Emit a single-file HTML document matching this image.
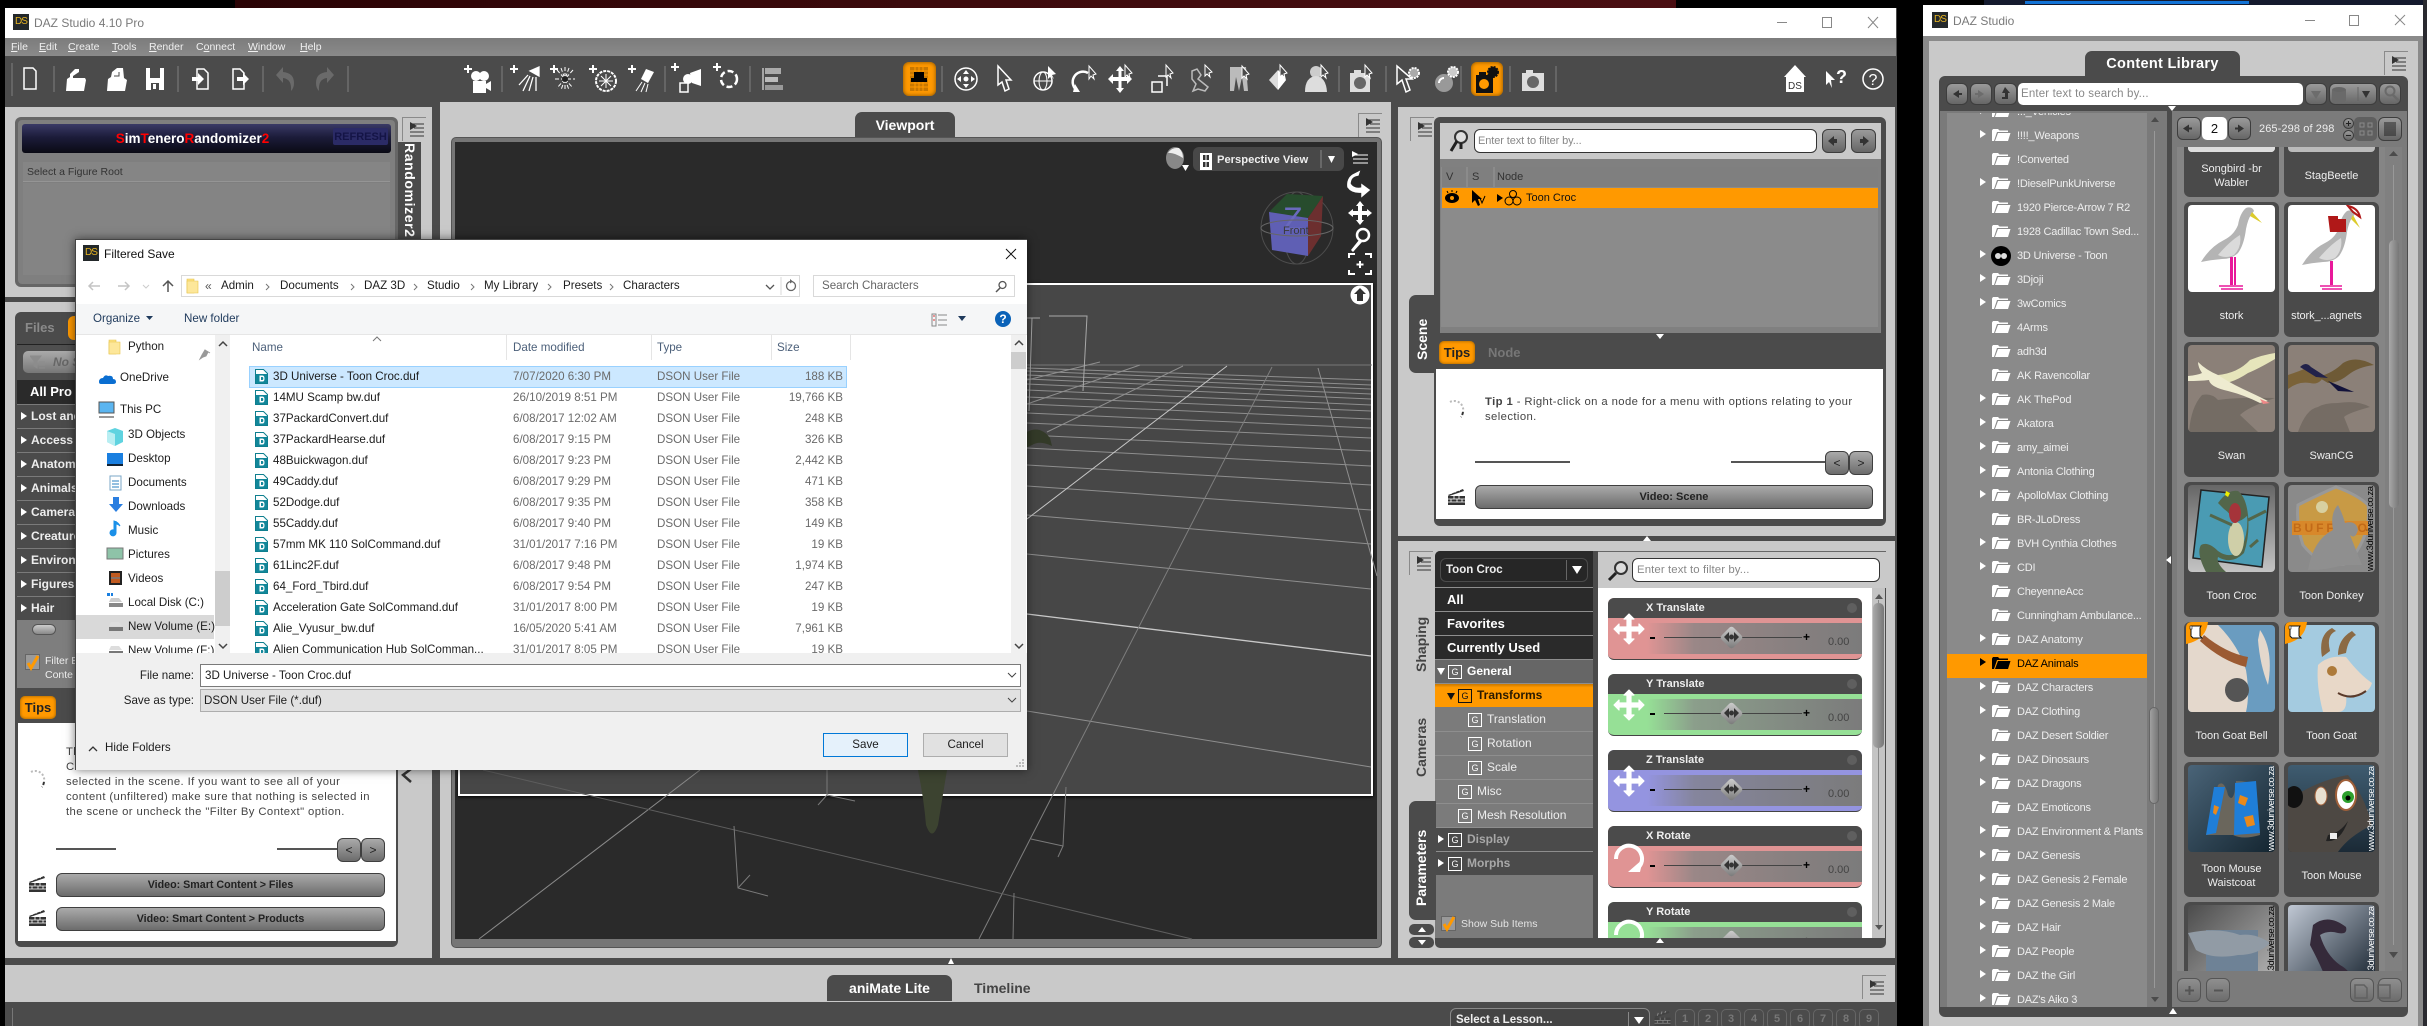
<!DOCTYPE html>
<html><head><meta charset="utf-8"><title>DAZ Studio</title>
<style>
html{margin:0;padding:0;background:#000;overflow:hidden;width:2427px;height:1026px;}
body{margin:0;padding:0;background:#000;width:2427px;height:1026px;overflow:hidden;position:relative;font-family:"Liberation Sans",sans-serif;font-size:11px;color:#fff;}
.a{position:absolute;white-space:nowrap;box-sizing:border-box;}
.btn{position:absolute;box-sizing:border-box;background:linear-gradient(#aaa,#6c6c6c);border:1px solid #3f3f3f;border-radius:6px;color:#222;text-align:center;}
.d{font-size:11.6px;color:#1c1c1c;}
.g{color:#6a6a6a;}
.tr{font-size:11px;letter-spacing:-.2px;color:#eee;left:2017px;line-height:16px;}
.pr{position:absolute;box-sizing:border-box;left:1435px;width:158px;height:24px;border-top:1px solid #8e8e8e;line-height:23px;font-size:13px;font-weight:bold;white-space:nowrap;}
.gi{position:absolute;width:14px;height:14px;border:1px solid #fff;box-sizing:border-box;font-size:9px;line-height:12px;text-align:center;color:#fff;font-weight:normal;}
.lr{position:absolute;box-sizing:border-box;left:17px;width:58px;height:24px;background:#4b4b4b;border-top:1px solid #7a7a7a;font-size:12px;font-weight:bold;line-height:23px;padding-left:14px;overflow:hidden;color:#eee;white-space:nowrap;}
.lab{position:absolute;text-align:center;font-size:11px;color:#eee;line-height:14px;width:95px;}
.card{position:absolute;width:95px;height:135px;background:#4a4a4a;border-radius:6px;}
.th{position:absolute;left:4px;top:3px;width:87px;height:87px;border-radius:4px;overflow:hidden;display:block;}
.sl{position:absolute;left:1608px;width:254px;height:61px;border-radius:6px;overflow:hidden;border-bottom:1px solid #444;}
.sl .h{position:absolute;left:0;top:0;width:254px;height:20px;background:#4b4b4b;color:#eee;font-size:11px;font-weight:bold;line-height:20px;padding-left:38px;box-sizing:border-box;}
.sl .b{position:absolute;left:39px;top:25px;width:215px;height:31px;}
.sl .v{position:absolute;left:220px;top:38px;color:#444;font-size:11px;}
.sl .t{position:absolute;left:56px;top:39px;width:138px;height:1px;background:#444;}
.sl .k{position:absolute;left:115px;top:31px;width:17px;height:17px;transform:rotate(45deg);background:linear-gradient(135deg,#d0d0d0,#777);border-radius:3px;}
.sl .m{position:absolute;left:42px;top:39px;width:5px;height:2px;background:#000;}
.sl .p{position:absolute;left:195px;top:32px;font-size:12px;font-weight:bold;color:#000;line-height:14px;}
.tb{position:absolute;box-sizing:border-box;background:linear-gradient(#9a9a9a,#666);border:1px solid #3d3d3d;border-radius:6px;}
</style></head>
<body>
<svg width="0" height="0" style="position:absolute">
<defs>
<symbol id="menuD" viewBox="0 0 24 24" overflow="visible"><path d="M.5 24V.5H24" fill="none" stroke="#8a8a8a"/><path d="M8 5l7 4-7 4z" fill="#333"/><path d="M8 7h14M12 11h10M8 15h14M8 19h14" stroke="#333" fill="none"/></symbol>
<symbol id="film" viewBox="0 0 17 16"><path d="M0 7h17v9H0z" fill="#333"/><path d="M0 10h17M0 13h17M6 7v3M11 7v3M3 10v3M9 10v3M14 10v3" stroke="#fff" stroke-width=".8"/><path d="M0 6L15 0l1 2L1 7z" fill="#333"/><path d="M3 5l1-3M7 3.500l1-3M11 2l1-2" stroke="#fff"/></symbol>
<symbol id="spin" viewBox="0 0 16 20"><path d="M1 2a9 9 0 0 1 13 10" fill="none" stroke="#bbb" stroke-width="2" stroke-dasharray="2 2"/><path d="M14 12q-.500 3-2 5" stroke="#333" stroke-width="2" fill="none" stroke-dasharray="3 2"/></symbol>
<symbol id="file" viewBox="0 0 13 15"><path d="M.5.500h8l4 4v10H.5z" fill="#fff" stroke="#0f7f8f"/><path d="M1 5h11v9H1z" fill="#12879a"/><path d="M4.500 6.500h3q2 0 2 3t-2 3h-3z" fill="#fff"/><path d="M6 8h1.300q1 0 1 1.500T7.300 11H6z" fill="#12879a"/></symbol>
<symbol id="fold" viewBox="0 0 20 14"><path d="M1 13V2.500L2 1h5l1.500 1.500H17V4H6L3 13zM4 13l3-8h12.500L17 13z" fill="#fff"/></symbol>
<symbol id="foldK" viewBox="0 0 20 14"><path d="M1 13V2.500L2 1h5l1.500 1.500H17V4H6L3 13zM4 13l3-8h12.500L17 13z" fill="#000"/></symbol>
<symbol id="yf" viewBox="0 0 16 16"><path d="M1 1h7v14H1z" fill="#fde283" stroke="#e6c34a" stroke-width=".6"/><path d="M1 3h11v12H1z" fill="#fde79a" stroke="#e6c34a" stroke-width=".6"/></symbol>
<symbol id="mov" viewBox="-16 -16 32 32"><path d="M0-15l5 5H2v8h8v-3l5 5-5 5v-3H2v8h3l-5 5-5-5h3V2h-8v3l-5-5 5-5v3h8v-8h-3z" fill="#fff" stroke="#fff" stroke-width="1.200" stroke-linejoin="round"/></symbol>
<symbol id="rot" viewBox="-16 -16 32 32"><path d="M-13 2a13 13 0 1 1 23 8" fill="none" stroke="#fff" stroke-width="4"/><path d="M14 2L11 15H-1z" fill="#fff"/></symbol>
<symbol id="scroll" viewBox="0 0 14 14"><path d="M2 1h10l-1 2v8l2 2H4l-2-2V3z" fill="#fff" stroke="#111"/><path d="M1 1h2v3H1z" fill="#fff" stroke="#111" stroke-width=".6"/></symbol>
</defs>
</svg>

<!-- desktop backdrop -->
<div class="a" style="left:235px;top:0;width:1441px;height:8px;background:linear-gradient(90deg,#2a0305,#3d0a0c 50%,#4a0e12)"></div>
<div class="a" style="left:1984px;top:0;width:443px;height:6px;background:#141a2e"></div>
<div class="a" style="left:2025px;top:1px;width:224px;height:3px;background:#1273d6"></div>
<div class="a" style="left:2423px;top:0;width:4px;height:1026px;background:#2a2a30"></div>

<!-- MAIN WINDOW -->
<div class="a" style="left:5px;top:8px;width:1892px;height:1018px;background:#4b4b4b"></div>
<div class="a" style="left:5px;top:8px;width:1891px;height:30px;background:#fff"></div>
<div class="a" style="left:13px;top:14px;width:16px;height:16px;background:#23282a;color:#e6b422;font-size:10px;line-height:16px;text-align:center;letter-spacing:-1px">DS</div>
<div class="a" style="left:34px;top:15px;font-size:12px;line-height:16px;color:#7a7a7a">DAZ Studio 4.10 Pro</div>
<svg class="a" style="left:1770px;top:12px" width="116" height="20"><path d="M7 10.500h10" stroke="#888"/><path d="M52.500 5.500h9v10h-9z" fill="none" stroke="#888"/><path d="M98 5l10 11M108 5L98 16" stroke="#888" fill="none"/></svg>
<div class="a" style="left:5px;top:38px;width:1891px;height:18px;background:linear-gradient(#7c7c7c,#8a8a8a)"></div>
<div class="a" style="left:11px;top:39px;line-height:16px;color:#f0f0f0;font-size:10.5px"><u>F</u>ile</div>
<div class="a" style="left:39px;top:39px;line-height:16px;color:#f0f0f0;font-size:10.5px"><u>E</u>dit</div>
<div class="a" style="left:68px;top:39px;line-height:16px;color:#f0f0f0;font-size:10.5px"><u>C</u>reate</div>
<div class="a" style="left:112px;top:39px;line-height:16px;color:#f0f0f0;font-size:10.5px"><u>T</u>ools</div>
<div class="a" style="left:149px;top:39px;line-height:16px;color:#f0f0f0;font-size:10.5px"><u>R</u>ender</div>
<div class="a" style="left:196px;top:39px;line-height:16px;color:#f0f0f0;font-size:10.5px">C<u>o</u>nnect</div>
<div class="a" style="left:248px;top:39px;line-height:16px;color:#f0f0f0;font-size:10.5px"><u>W</u>indow</div>
<div class="a" style="left:300px;top:39px;line-height:16px;color:#f0f0f0;font-size:10.5px"><u>H</u>elp</div>

<!-- orange toolbar buttons -->
<div class="a" style="left:903px;top:62px;width:33px;height:34px;border-radius:6px;background:#ff9900;box-shadow:inset 0 0 4px #7a4a00"></div>
<div class="a" style="left:1471px;top:62px;width:32px;height:34px;border-radius:6px;background:#ff9900;box-shadow:inset 0 0 4px #7a4a00"></div>

<!-- toolbar icons -->
<svg class="a" style="left:0;top:56px" width="1897" height="46" viewBox="0 56 1897 46">
<g stroke="#6e6e6e" stroke-width="1.500"><path d="M12 63v33M54 66v26M178 66v26M263 66v26M348 66v26M502 66v26M665 66v26M750 66v26M942 66v26M1339 66v26M1386 66v26M1461 66v26M1510 66v26M1556 66v26"/></g>
<g fill="#fff">
<g transform="translate(30,79)"><path d="M-6-11H3L6-8V10H-6Z" fill="#4b4b4b" stroke="#fff" stroke-width="1.500"/></g>
<g transform="translate(76,79)"><path d="M-10 12L-9 0-6-2-6-5-1-10 3-10 3-7-3-3-3-1 9-1 10 1 8 12Z"/></g>
<g transform="translate(117,79)"><path d="M-10 12L-9 0-6-2-5-7 0-11 6-11 7-1 10 1 8 12Z"/><path d="M-3-3h5v-4" stroke="#4b4b4b" fill="none"/></g>
<g transform="translate(155,79)"><path d="M-9-11H9V11H-9Z"/><path d="M-5-11H5V-1H-5ZM-4 4H4V11H-4Z" fill="#4b4b4b"/><path d="M-2 5H1V10H-2Z"/></g>
<g transform="translate(201,79)"><path d="M-4-10H3L7-6V10H-4Z" fill="#4b4b4b" stroke="#fff" stroke-width="1.500"/><path d="M-9-2h6v-4l6 6-6 6V2H-9Z"/></g>
<g transform="translate(240,79)"><path d="M-7-10H0L4-6V10H-7Z" fill="#4b4b4b" stroke="#fff" stroke-width="1.500"/><path d="M-3-2H3V-6L9 0 3 6V2H-3Z"/></g>
<g transform="translate(285,79)" fill="#6a6a6a"><path d="M-9-4L-2-12V-7Q9-6 9 4 9 9 6 12 7 0-2-1V4Z"/></g>
<g transform="translate(325,79)" fill="#6a6a6a"><path d="M9-4L2-12V-7Q-9-6-9 4-9 9-6 12-7 0 2-1V4Z"/></g>
<g transform="translate(479,79)"><path d="M-12-14h2v3h3v2h-3v3h-2v-3h-3v-2h3z"/><circle cx="-3" cy="-3" r="5"/><circle cx="5" cy="-3" r="5"/><path d="M-6 2H7V5L12 2V12L7 9V14H-6Z"/></g>
<g transform="translate(527,79)"><path d="M-14-14h2v3h3v2h-3v3h-2v-3h-3v-2h3z"/><path d="M3-8L12-12V-3ZM1-4L-8 6M3-3L-4 12M6-2L2 12M9-2V12" stroke="#fff" stroke-width="1.300" fill="#fff"/></g>
<g transform="translate(565,79)"><path d="M-12-14h2v3h3v2h-3v3h-2v-3h-3v-2h3z"/><path d="M0-12V12M-10 0H10M-8-9L8 9M8-9L-8 9M-4-11L4 11M4-11L-4 11" stroke="#fff" stroke-width="1" stroke-dasharray="4 2"/><circle r="3" fill="#222"/></g>
<g transform="translate(606,79)"><path d="M-14-14h2v3h3v2h-3v3h-2v-3h-3v-2h3z"/><circle r="10" cy="2" fill="#4b4b4b" stroke="#fff" stroke-width="2" stroke-dasharray="3 1"/><path d="M0-5V9M-7 2H7M-5-3L5 7M5-3L-5 7" stroke="#fff"/></g>
<g transform="translate(643,79)"><path d="M-12-14h2v3h3v2h-3v3h-2v-3h-3v-2h3z"/><path d="M3-10L11-7 5 4-2 0Z"/><path d="M-1 3L-7 12M2 4L-2 13M5 5L3 13" stroke="#fff"/></g>
<g transform="translate(689,79)"><path d="M-15-16h2v3h3v2h-3v3h-2v-3h-3v-2h3z"/><path d="M1-6L12-10V7L3 4Z"/><circle cx="-1" cy="0" r="5"/><path d="M-9 4H-1V13H-9Z" fill="#4b4b4b" stroke="#fff" stroke-width="1.500"/></g>
<g transform="translate(729,79)"><path d="M-13-16h2v3h3v2h-3v3h-2v-3h-3v-2h3z"/><circle r="8" fill="none" stroke="#fff" stroke-width="2.500" stroke-dasharray="6 3"/></g>
<g transform="translate(773,79)"><path d="M-10-11V11" stroke="#fff"/><path d="M-8-11H8V-5H-8Z" fill="#aaa"/><path d="M-8-2H5V3H-8Z" fill="#bbb"/><path d="M-8 6H10V11H-8Z" fill="#999"/></g>
<g transform="translate(919,79)"><rect x="-9" y="-12" width="18" height="24" fill="#c97800"/><path d="M-9-8h18M-9-4h18M-9 0h18M-9 4h18M-9 8h18M-4-12v24M0-12v24M4-12v24" stroke="#ff9900"/><path d="M-5-7H5V3H-5ZM-8 -1H8V3H-8Z" fill="#000"/></g>
<g transform="translate(966,79)"><circle r="11" fill="#4b4b4b" stroke="#fff" stroke-width="1.500"/><path d="M0-9L3-5H-3ZM0 9L3 5H-3ZM-9 0L-5-3V3ZM9 0L5-3V3Z"/><circle r="2.500"/></g>
<g transform="translate(1004,79)"><path d="M-6-13V6L-2 3 1 12 5 10 2 1H7Z" fill="#4b4b4b" stroke="#fff" stroke-width="1.500"/></g>
<g transform="translate(1043,79)"><circle r="9" cy="2" fill="none" stroke="#fff" stroke-width="1.500"/><ellipse cy="2" rx="4" ry="9" fill="none" stroke="#fff"/><path d="M-9 2H9" stroke="#fff"/><path d="M5-13V0L8-3 11 0 9-4 13-5Z"/></g>
<g transform="translate(1082,79)"><path d="M-4 12A10 10 0 1 1 6 -6" fill="none" stroke="#fff" stroke-width="2.500"/><path d="M-7 5L-2 13-9 13Z"/><path d="M7-13V0L9-3 12 0 11-4 14-5Z" fill="#4b4b4b" stroke="#fff"/></g>
<g transform="translate(1120,79)"><path d="M0-13L4-8H1.500V-2H7V-5L12 0 7 5V2H1.500V9H4L0 14-4 9H-1.500V2H-7V5L-12 0-7-5V-2H-1.500V-8H-4Z"/><path d="M5-14V-2L7-4 10-1 9-5 12-6Z" fill="#4b4b4b" stroke="#fff"/></g>
<g transform="translate(1160,79)"><path d="M-8 3H2V13H-8Z" fill="#4b4b4b" stroke="#fff" stroke-width="1.500"/><path d="M-2-3H7V7" fill="none" stroke="#fff" stroke-width="1.500"/><path d="M6-14V-2L8-4 11-1 10-5 13-6Z" fill="#4b4b4b" stroke="#fff"/></g>
<g transform="translate(1200,79)" fill="#bbb"><path d="M-8-8L-3-10 1-4-2 0 8 8 5 12-2 10-7 12-4 5-8 0Z" fill="none" stroke="#bbb" stroke-width="1.500"/><path d="M5-14V-3L7-5 10-2 9-6 12-7Z" fill="#4b4b4b" stroke="#fff"/></g>
<g transform="translate(1239,79)"><path d="M-9 12V-12H7L9 12H5L3-2 0 12-3-2-5 12Z" fill="#bbb"/><path d="M3-13V-1L5-3 8 0 7-4 10-5Z" fill="#4b4b4b" stroke="#fff"/></g>
<g transform="translate(1277,79)"><path d="M-8 1L1-9 9 1 1 11Z" fill="#ddd"/><path d="M1-9L9 1 1 11Z" fill="#fff"/><path d="M3-14V-2L5-4 8-1 7-5 10-6Z" fill="#4b4b4b" stroke="#fff"/></g>
<g transform="translate(1316,79)"><circle cy="-7" r="6" fill="#ccc"/><path d="M-11 13Q-11-2 0-3 10-2 11 13Z" fill="#ddd"/><path d="M5-14V-2L7-4 10-1 9-5 12-6Z" fill="#4b4b4b" stroke="#fff"/></g>
<g transform="translate(1360,79)"><path d="M-10-6H10V13H-10Z" fill="#ddd"/><circle cy="4" r="6" fill="#666"/><path d="M-6-9H1V-6H-6Z" fill="#ddd"/><path d="M5-14V-2L7-4 10-1 9-5 12-6Z" fill="#4b4b4b" stroke="#fff"/></g>
<g transform="translate(1408,79)"><path d="M-11-13V5L-6 1-2 13 2 11-2 0H4Z" fill="#4b4b4b" stroke="#fff" stroke-width="1.500"/><circle cx="6" cy="-6" r="5" fill="#aaa" stroke="#fff" stroke-dasharray="2 1" stroke-width="2"/></g>
<g transform="translate(1447,79)"><circle cx="-3" cy="4" r="9" fill="#999"/><path d="M-8 4a5 5 0 0 1 5-5" stroke="#fff" fill="none" stroke-width="2"/><circle cx="6" cy="-7" r="5" fill="#ccc" stroke="#fff" stroke-dasharray="2 1" stroke-width="2"/></g>
<g transform="translate(1487,79)"><path d="M-11-4H6V14H-11Z" fill="#111"/><circle cx="-3" cy="5" r="5" fill="#ff9900"/><path d="M-8-7H-1V-4H-8Z" fill="#111"/><circle cx="6" cy="-7" r="5" fill="#111" stroke="#111" stroke-dasharray="2 1" stroke-width="2"/></g>
<g transform="translate(1533,79)"><path d="M-11-6H11V12H-11Z" fill="#ddd"/><path d="M-7-9H0V-6H-7Z" fill="#ddd"/><circle cy="3" r="6" fill="#666"/></g>
<g transform="translate(1795,79)"><path d="M0-14L11-2H9V13H-9V-2H-11Z"/><text x="0" y="10" text-anchor="middle" font-size="10" fill="#333" font-family="Liberation Sans">DS</text></g>
<g transform="translate(1833,79)"><path d="M-7-8V6L-4 3-1 9-2 1H2Z"/><text x="3" y="4" font-size="18" font-weight="bold" fill="#fff" font-family="Liberation Sans">?</text></g>
<g transform="translate(1873,79)"><circle r="10" fill="none" stroke="#fff" stroke-width="1.500"/><text x="0" y="6" text-anchor="middle" font-size="16" fill="#fff" font-family="Liberation Sans">?</text></g>
<path d="M219 102l-4 5h8zM1647 102l-4 5h8z" fill="#fff"/>
</g>
</svg>

<!-- LEFT TOP PANEL -->
<div class="a" style="left:5px;top:107px;width:427px;height:190px;background:#c9c9c9"></div>
<svg class="a" style="left:402px;top:117px" width="24" height="24"><use href="#menuD" width="24" height="24"/></svg>
<div class="a" style="left:15px;top:117px;width:383px;height:170px;background:#666;border-radius:6px"></div>
<div class="a" style="left:18px;top:120px;width:377px;height:164px;background:#7f7f7f;border-radius:4px"></div>
<div class="a" style="left:22px;top:124px;width:369px;height:29px;border-radius:3px;background:linear-gradient(#3a3a66,#1c1c3a 45%,#0a0a14);font-size:13.500px;font-weight:bold;line-height:29px;text-align:center;padding-right:28px"><span style="color:#f00">S</span>im<span style="color:#f00">T</span>enero<span style="color:#f00">R</span>andomizer<span style="color:#f00">2</span></div>
<div class="a" style="left:333px;top:128px;width:55px;height:17px;background:#2b2b66;color:#141446;font-size:11px;line-height:18px;text-align:center;font-weight:bold;border-radius:2px">REFRESH</div>
<div class="a" style="left:23px;top:162px;width:367px;height:20px;background:#858585;border-bottom:1px solid #959595;color:#333;font-size:10.500px;line-height:20px;padding-left:4px">Select a Figure Root</div>
<div class="a" style="left:23px;top:183px;width:367px;height:92px;background:#848484"></div>
<div class="a" style="left:398px;top:142px;width:23px;height:100px;background:#4b4b4b"></div>
<div class="a" style="left:402px;top:143px;height:100px;writing-mode:vertical-lr;font-size:14px;font-weight:bold;color:#fff;line-height:16px;letter-spacing:.6px">Randomizer2</div>
<div class="a" style="left:432px;top:102px;width:8px;height:856px;background:#4b4b4b"></div>

<!-- LEFT LOWER PANEL -->
<div class="a" style="left:5px;top:302px;width:427px;height:656px;background:#c9c9c9"></div>
<div class="a" style="left:15px;top:312px;width:383px;height:635px;background:#4b4b4b;border-radius:6px"></div>
<div class="a" style="left:25px;top:319px;font-size:13px;font-weight:bold;color:#8a8a8a;line-height:18px">Files</div>
<div class="a" style="left:68px;top:316px;width:30px;height:24px;background:#ff9900;border-radius:6px 0 0 6px"></div>
<div class="a" style="left:17px;top:344px;width:60px;height:36px;background:#4f4f4f;border-top:1px solid #222"></div>
<div class="a" style="left:23px;top:351px;width:60px;height:22px;background:linear-gradient(#aaa,#777);border-radius:5px;color:#666;font-size:12px;font-weight:bold;font-style:italic;line-height:22px;padding-left:30px">No S</div>
<svg class="a" style="left:30px;top:355px" width="16" height="15"><path d="M0 1h11L7 6v7L4 11V6zM9 7h6M9 10h6M9 13h6" fill="#8c8c8c" stroke="#8c8c8c"/></svg>
<div class="a" style="left:17px;top:380px;width:58px;height:24px;background:#2a2a2a;font-size:13px;font-weight:bold;line-height:24px;padding-left:13px;color:#fff;overflow:hidden">All Pro</div>
<div class="lr" style="top:404px">Lost and</div>
<div class="lr" style="top:428px">Access</div>
<div class="lr" style="top:452px">Anatom</div>
<div class="lr" style="top:476px">Animals</div>
<div class="lr" style="top:500px">Camera</div>
<div class="lr" style="top:524px">Creature</div>
<div class="lr" style="top:548px">Environ</div>
<div class="lr" style="top:572px">Figures</div>
<div class="lr" style="top:596px">Hair</div>
<svg class="a" style="left:20px;top:404px" width="10" height="216" fill="#fff"><path d="M1 8l6 4-6 4zM1 32l6 4-6 4zM1 56l6 4-6 4zM1 80l6 4-6 4zM1 104l6 4-6 4zM1 128l6 4-6 4zM1 152l6 4-6 4zM1 176l6 4-6 4zM1 200l6 4-6 4z"/></svg>
<div class="a" style="left:17px;top:620px;width:60px;height:68px;background:#7e7e7e"></div>
<div class="a" style="left:32px;top:624px;width:24px;height:11px;background:linear-gradient(#ccc,#888);border-radius:6px;border:1px solid #555"></div>
<div class="a" style="left:25px;top:654px;width:15px;height:16px;background:#9a9a9a;border:1px solid #666"></div>
<svg class="a" style="left:25px;top:654px" width="16" height="18"><path d="M3 9l3 5 7-12" fill="none" stroke="#ff9900" stroke-width="3"/></svg>
<div class="a" style="left:45px;top:654px;font-size:10.500px;color:#eee;line-height:14px">Filter B<br>Conte</div>
<div class="a" style="left:20px;top:696px;width:36px;height:23px;background:#ff9900;border-radius:5px;color:#222;font-size:13px;font-weight:bold;line-height:23px;text-align:center;box-shadow:inset 0 0 3px #8a5500">Tips</div>
<div class="a" style="left:18px;top:723px;width:378px;height:218px;background:#fff"></div>
<div class="a" style="left:66px;top:745px;font-size:11.300px;letter-spacing:.4px;color:#444;line-height:15px;width:330px">Th<br>Co<br>selected in the scene. If you want to see all of your<br>content (unfiltered) make sure that nothing is selected in<br>the scene or uncheck the "Filter By Context" option.</div>
<svg class="a" style="left:30px;top:770px" width="16" height="20"><use href="#spin" width="16" height="20"/></svg>
<div class="a" style="left:56px;top:848px;width:60px;height:1.500px;background:#555"></div>
<div class="a" style="left:277px;top:848px;width:60px;height:1.500px;background:#555"></div>
<div class="btn" style="left:337px;top:838px;width:24px;height:24px;font-size:12px;line-height:22px">&lt;</div>
<div class="btn" style="left:361px;top:838px;width:24px;height:24px;font-size:12px;line-height:22px">&gt;</div>
<svg class="a" style="left:29px;top:873px" width="17" height="22"><use href="#film" width="17" height="22"/></svg>
<svg class="a" style="left:29px;top:907px" width="17" height="22"><use href="#film" width="17" height="22"/></svg>
<div class="btn" style="left:56px;top:873px;width:329px;height:24px;font-size:10.700px;font-weight:bold;line-height:22px">Video: Smart Content &gt; Files</div>
<div class="btn" style="left:56px;top:907px;width:329px;height:24px;font-size:10.700px;font-weight:bold;line-height:22px">Video: Smart Content &gt; Products</div>
<svg class="a" style="left:398px;top:768px" width="20" height="16"><path d="M13 1L5 7l8 7" fill="none" stroke="#333" stroke-width="2.500"/></svg>

<!-- VIEWPORT -->
<div class="a" style="left:440px;top:102px;width:951px;height:856px;background:#c9c9c9"></div>
<div class="a" style="left:855px;top:112px;width:100px;height:26px;background:#4b4b4b;border-radius:7px 7px 0 0;font-size:14px;font-weight:bold;line-height:27px;text-align:center;color:#fff">Viewport</div>
<svg class="a" style="left:1358px;top:113px" width="24" height="24"><use href="#menuD" width="24" height="24"/></svg>
<div class="a" style="left:451px;top:137px;width:931px;height:811px;background:#767676;border-radius:5px;border:1px solid #555"></div>
<div class="a" style="left:455px;top:142px;width:922px;height:797px;background:#2a2a2a"></div>
<div class="a" style="left:458px;top:283px;width:915px;height:513px;background:#474747;border:2px solid #fff;box-shadow:0 1px 3px #000"></div>
<svg class="a" style="left:0;top:0" width="1400" height="970" viewBox="0 0 1400 970">
<g stroke="#8e8e8e" stroke-width="1" fill="none">
<path d="M1027 365H1372" stroke="#777"/>
<path d="M1027 614L1371 656" stroke="#c8c8c8" stroke-width="1.300"/>
<path d="M1027 711L1371 767M1027 554L1371 589M1027 515L1371 544M1027 486L1371 510M1027 465L1371 485M1027 448L1371 466M1027 435L1371 451M1027 423L1371 438M1027 413L1371 428M1027 404L1371 419M1027 397L1371 411M1027 390L1371 405M1027 384L1371 399M1027 379L1371 394M1027 375L1371 389M1027 371L1371 385M1027 368L1371 380"/>
<path d="M1227 366L1027 519" stroke="#c6c6c6"/>
<path d="M700 770L479 939" stroke="#8a8a8a"/>
<path d="M1272 367L979 939" stroke="#7e7e7e"/>
<path d="M1318 368L1377 576"/>
<path d="M1183 366L1047 432M1140 365L1027 404M1100 362L1027 380"/>
<path d="M483 770L1192 939" stroke="#5e5e5e"/>
<path d="M1049 316H1087L1083 391M1027 318H1040M1032 318L1029 411" stroke="#a8a8a8"/>
<path d="M1066 787L1063 846 1031 839M1063 846L1058 857" stroke="#7a7a7a"/>
<path d="M734 826L738 888 768 896M738 888L750 875" stroke="#7a7a7a"/>
<path d="M827 770V795L855 801M827 795L818 805" stroke="#7a7a7a"/>
<path d="M1014 893L1013 939" stroke="#7a7a7a"/>
</g>
<path d="M918 770Q924 800 926 825 932 842 938 825 942 800 947 770Z" fill="#3c4330"/>
<path d="M1027 432Q1040 425 1050 438L1052 446Q1040 440 1032 445 1028 447 1027 447Z" fill="#333a28"/>
<!-- viewport controls -->
<g transform="translate(1175,158)"><ellipse cx="0" cy="0" rx="9" ry="11" fill="#888"/><path d="M-7-5Q-3-11 4-10 8-6 8 0-2-6-7-5Z" fill="#eee"/></g>
<path d="M1182 165l7 0-3.500 6z" fill="#fff"/>
<rect x="1193" y="147" width="151" height="24" rx="6" fill="#484848"/>
<path d="M1200 153H1212V170H1200Z" fill="#fff"/><path d="M1203 155v5h2.500v-5zM1206.500 155v5h2.500v-5zM1203 162v5h2.500v-5zM1206.500 162v5h2.500v-5z" fill="#333"/>
<text x="1217" y="163" font-family="Liberation Sans" font-size="11.200" font-weight="bold" fill="#eee">Perspective View</text>
<path d="M1321 150v18" stroke="#888"/><path d="M1328 156h7l-3.500 7z" fill="#fff"/>
<path d="M1352 151l6 3-6 3z" fill="#fff"/><path d="M1353 155h15M1353 159h15M1353 163h15" stroke="#fff" fill="none"/>
<g fill="#fff">
<path d="M1350 184Q1350 176 1358 175L1359 172 1353 175Q1347 179 1348 187 1352 193 1362 192V196L1369 190 1362 185V188Q1354 190 1350 184Z" stroke="#fff" stroke-width="1.500"/>
<path d="M1360 201L1364 206H1362V211H1367V209L1372 213 1367 217V215H1362V220H1364L1360 225 1356 220H1358V215H1353V217L1348 213 1353 209V211H1358V206H1356Z"/>
<circle cx="1363" cy="235" r="6" fill="none" stroke="#fff" stroke-width="2.500"/><path d="M1359 240L1351 250 1353 252 1362 242Z"/>
<path d="M1352 258v-4h6M1368 254h6v4M1352 270v4h6M1374 270v4h-6M1363 261v7M1359.500 264.500h7" fill="none" stroke="#fff" stroke-width="2" transform="translate(-3,0)"/>
<circle cx="1360" cy="295" r="9.500"/><path d="M1360 288l6 6h-3v7h-6v-7h-3z" fill="#333"/>
</g>
<!-- cube -->
<g transform="translate(1297,228)">
<ellipse rx="36" ry="36" fill="none" stroke="#4d4d4d"/><ellipse rx="36" ry="8" fill="none" stroke="#4d4d4d"/><ellipse rx="14" ry="36" fill="none" stroke="#4d4d4d"/>
<path d="M-28-16L-10-34 26-32 11-10Z" fill="#274c2d"/>
<path d="M-28-16L11-10 11 28-25 22Z" fill="#5f5fb4"/>
<path d="M11-10L26-32 24 8 11 28Z" fill="#6c2f2f"/>
<text x="-14" y="2" font-family="Liberation Sans" font-size="32" fill="#6a6abd">Z</text>
<text x="-14" y="6" font-family="Liberation Sans" font-size="11" fill="#3a3a3a">Front</text>
<ellipse rx="36" ry="8" fill="none" stroke="#666"/>
</g>
</svg>

<!-- RIGHT TOP PANEL -->
<div class="a" style="left:1391px;top:102px;width:7px;height:856px;background:#4b4b4b"></div>
<div class="a" style="left:1398px;top:107px;width:497px;height:429px;background:#c9c9c9"></div>
<svg class="a" style="left:1410px;top:117px" width="24" height="24"><use href="#menuD" width="24" height="24"/></svg>
<div class="a" style="left:1434px;top:117px;width:452px;height:409px;background:#4b4b4b;border-radius:6px"></div>
<div class="a" style="left:1440px;top:123px;width:441px;height:36px;background:#c9c9c9"></div>
<svg class="a" style="left:1448px;top:128px" width="24" height="26"><circle cx="13" cy="9" r="6" fill="#ddd" stroke="#333" stroke-width="2"/><path d="M9 13L3 23M13 15v6" stroke="#222" stroke-width="3"/></svg>
<div class="a" style="left:1474px;top:129px;width:343px;height:24px;background:#fff;border:1px solid #333;border-radius:6px;color:#888;font-size:11px;line-height:22px;padding-left:3px;letter-spacing:-.1px">Enter text to filter by...</div>
<div class="tb" style="left:1822px;top:129px;width:24px;height:24px"></div>
<div class="tb" style="left:1851px;top:129px;width:25px;height:24px"></div>
<svg class="a" style="left:1822px;top:129px" width="54" height="24" fill="#333"><path d="M6 12l6-5v3h3v4h-3v3z"/><path d="M47 12l-6-5v3h-3v4h3v3z"/></svg>
<div class="a" style="left:1440px;top:159px;width:441px;height:174px;background:#808080"></div>
<div class="a" style="left:1441px;top:167px;width:437px;height:160px;background:#8b8b8b"></div>
<div class="a" style="left:1442px;top:167px;width:24px;height:20px;background:#7f7f7f;color:#333;line-height:20px;padding-left:4px;font-size:11px">V</div>
<div class="a" style="left:1468px;top:167px;width:25px;height:20px;background:#7f7f7f;color:#333;line-height:20px;padding-left:4px;font-size:11px">S</div>
<div class="a" style="left:1495px;top:167px;width:383px;height:20px;background:#7f7f7f;color:#333;line-height:20px;padding-left:2px;font-size:11px">Node</div>
<div class="a" style="left:1442px;top:188px;width:436px;height:20px;background:#ff9900"></div>
<svg class="a" style="left:1442px;top:188px" width="80" height="20"><ellipse cx="10" cy="10" rx="7" ry="5" fill="#000"/><circle cx="10" cy="10" r="2" fill="#ff9900"/><path d="M6 5l-1-2M10 4V2M14 5l1-2" stroke="#000"/><path d="M30 2v13l3-3 3 6 2-1-2-6h4z" fill="#000"/><path d="M38 10l2 5 3-7" fill="none" stroke="#000"/><path d="M55 6l6 4-6 4z" fill="#000"/><circle cx="71" cy="6" r="3.500" fill="none" stroke="#000"/><circle cx="67" cy="13" r="4" fill="none" stroke="#000"/><circle cx="75" cy="13" r="4" fill="none" stroke="#000"/></svg>
<div class="a" style="left:1526px;top:188px;line-height:20px;color:#111;font-size:11px">Toon Croc</div>
<div class="a" style="left:1409px;top:295px;width:27px;height:78px;background:#4b4b4b;border-radius:7px 0 0 7px"></div>
<div class="a" style="left:1414px;top:305px;height:55px;writing-mode:vertical-rl;transform:rotate(180deg);font-size:14px;font-weight:bold;color:#fff;line-height:16px;text-align:left">Scene</div>
<svg class="a" style="left:1650px;top:333px" width="20" height="8"><path d="M6 1h8l-4 5z" fill="#fff"/></svg>
<div class="a" style="left:1439px;top:341px;width:36px;height:23px;background:#ff9900;border-radius:5px;color:#222;font-size:13px;font-weight:bold;line-height:23px;text-align:center;box-shadow:inset 0 0 3px #8a5500">Tips</div>
<div class="a" style="left:1488px;top:345px;font-size:13px;font-weight:bold;color:#777;line-height:16px">Node</div>
<div class="a" style="left:1436px;top:369px;width:447px;height:150px;background:#fff"></div>
<div class="a" style="left:1485px;top:395px;font-size:11.300px;color:#444;line-height:15px;letter-spacing:.4px"><b>Tip 1</b> - Right-click on a node for a menu with options relating to your<br>selection.</div>
<svg class="a" style="left:1449px;top:400px" width="16" height="20"><use href="#spin" width="16" height="20"/></svg>
<div class="a" style="left:1475px;top:461px;width:95px;height:1.500px;background:#555"></div>
<div class="a" style="left:1731px;top:461px;width:94px;height:1.500px;background:#555"></div>
<div class="btn" style="left:1825px;top:451px;width:24px;height:24px;font-size:12px;line-height:22px">&lt;</div>
<div class="btn" style="left:1849px;top:451px;width:24px;height:24px;font-size:12px;line-height:22px">&gt;</div>
<svg class="a" style="left:1448px;top:488px" width="17" height="18"><use href="#film" width="17" height="18"/></svg>
<div class="btn" style="left:1475px;top:485px;width:398px;height:24px;font-size:11px;font-weight:bold;line-height:22px">Video: Scene</div>

<!-- PARAM PANEL -->
<div class="a" style="left:1398px;top:541px;width:497px;height:417px;background:#c9c9c9"></div>
<svg class="a" style="left:1640px;top:536px" width="14" height="6"><path d="M7 0l4 5H3z" fill="#fff"/></svg>
<svg class="a" style="left:1409px;top:551px" width="24" height="24"><use href="#menuD" width="24" height="24"/></svg>
<div class="a" style="left:1435px;top:551px;width:451px;height:397px;background:#4b4b4b;border-radius:5px"></div>
<div class="a" style="left:1435px;top:551px;width:158px;height:36px;background:#2a2a2a;border-radius:5px 0 0 0"></div>
<div class="a" style="left:1440px;top:558px;width:148px;height:24px;border:1px solid #4b4b4b;border-radius:6px;background:#262626;font-size:11.500px;font-weight:bold;line-height:22px;padding-left:5px;color:#eee">Toon Croc</div>
<div class="a" style="left:1566px;top:560px;width:1px;height:20px;background:#666"></div>
<svg class="a" style="left:1570px;top:562px" width="16" height="16"><path d="M2 4h10L7 12z" fill="#fff"/></svg>
<div class="pr" style="top:587px;background:#2a2a2a;padding-left:12px">All</div>
<div class="pr" style="top:611px;background:#2a2a2a;padding-left:12px">Favorites</div>
<div class="pr" style="top:635px;background:#2a2a2a;padding-left:12px">Currently Used</div>
<div class="pr" style="top:659px;background:#666;padding-left:32px;font-size:12px">General<span class="gi" style="left:13px;top:5px">G</span></div>
<div class="pr" style="top:683px;background:linear-gradient(#c97800 0,#ff9900 15%);padding-left:42px;color:#2a1a00;font-size:12px;border-top-color:#8e8e8e">Transforms<span class="gi" style="left:23px;top:5px;border-color:#111;color:#111">G</span></div>
<div class="pr" style="top:707px;background:#7b7b7b;padding-left:52px;font-weight:normal;font-size:12px;border-top-color:#7b7b7b;color:#eee">Translation<span class="gi" style="left:33px;top:5px">G</span></div>
<div class="pr" style="top:731px;background:#7b7b7b;padding-left:52px;font-weight:normal;font-size:12px;color:#eee">Rotation<span class="gi" style="left:33px;top:5px">G</span></div>
<div class="pr" style="top:755px;background:#7b7b7b;padding-left:52px;font-weight:normal;font-size:12px;color:#eee">Scale<span class="gi" style="left:33px;top:5px">G</span></div>
<div class="pr" style="top:779px;background:#7b7b7b;padding-left:42px;font-weight:normal;font-size:12px;color:#eee">Misc<span class="gi" style="left:23px;top:5px">G</span></div>
<div class="pr" style="top:803px;background:#7b7b7b;padding-left:42px;font-weight:normal;font-size:12px;color:#eee">Mesh Resolution<span class="gi" style="left:23px;top:5px">G</span></div>
<div class="pr" style="top:827px;background:#4b4b4b;padding-left:32px;font-size:12px;color:#a8a8a8">Display<span class="gi" style="left:13px;top:5px">G</span></div>
<div class="pr" style="top:851px;background:#4b4b4b;padding-left:32px;font-size:12px;color:#a8a8a8">Morphs<span class="gi" style="left:13px;top:5px">G</span></div>
<div class="a" style="left:1435px;top:875px;width:158px;height:63px;background:#7b7b7b"></div>
<svg class="a" style="left:1436px;top:659px" width="14" height="216"><path d="M1 9h8l-4 7z" fill="#fff"/><path d="M2 176l6 4-6 4zM2 200l6 4-6 4z" fill="#fff"/></svg>
<svg class="a" style="left:1446px;top:687px" width="10" height="16"><path d="M1 6h8l-4 7z" fill="#111"/></svg>
<div class="a" style="left:1441px;top:916px;width:15px;height:15px;background:#999;border:1px solid #666"></div>
<svg class="a" style="left:1441px;top:914px" width="16" height="18"><path d="M3 10l3 5 7-12" fill="none" stroke="#ff9900" stroke-width="3"/></svg>
<div class="a" style="left:1461px;top:916px;font-size:10.500px;color:#e4e4e4;line-height:16px">Show Sub Items</div>
<div class="a" style="top:606px;height:66px;width:16px;writing-mode:vertical-rl;transform:rotate(180deg);font-size:14px;font-weight:bold;color:#444;line-height:16px;left:1413px">Shaping</div>
<div class="a" style="left:1413px;top:707px;height:70px;writing-mode:vertical-rl;transform:rotate(180deg);font-size:14px;font-weight:bold;color:#444;line-height:16px">Cameras</div>
<div class="a" style="left:1409px;top:801px;width:27px;height:119px;background:#4b4b4b;border-radius:7px 0 0 7px"></div>
<div class="a" style="left:1413px;top:813px;height:93px;writing-mode:vertical-rl;transform:rotate(180deg);font-size:14px;font-weight:bold;color:#fff;line-height:16px">Parameters</div>
<div class="a" style="left:1409px;top:924px;width:25px;height:11px;background:#4b4b4b;border-radius:5px"></div>
<div class="a" style="left:1409px;top:937px;width:25px;height:11px;background:#4b4b4b;border-radius:5px"></div>
<svg class="a" style="left:1415px;top:925px" width="14" height="22"><path d="M3 7l4-5 4 5zM3 15l4 5 4-5z" fill="#fff"/></svg>

<div class="a" style="left:1598px;top:551px;width:288px;height:37px;background:#c9c9c9;border-top:1px solid #666"></div>
<svg class="a" style="left:1606px;top:559px" width="28" height="26"><circle cx="15" cy="9" r="6" fill="#ddd" stroke="#333" stroke-width="2"/><path d="M10 14L3 21" stroke="#222" stroke-width="3"/></svg>
<div class="a" style="left:1632px;top:558px;width:248px;height:24px;background:#fff;border:1px solid #333;border-radius:6px;color:#888;font-size:11.400px;line-height:22px;padding-left:4px;letter-spacing:.1px">Enter text to filter by...</div>
<div class="a" style="left:1598px;top:588px;width:274px;height:350px;background:#fff"></div>
<div class="a" style="left:1872px;top:588px;width:13px;height:350px;background:#c4c4c4"></div>
<div class="a" style="left:1878px;top:600px;width:1px;height:325px;background:#888"></div>
<div class="a" style="left:1873px;top:603px;width:11px;height:145px;background:linear-gradient(90deg,#aaa,#777);border-radius:5px"></div>
<svg class="a" style="left:1872px;top:590px" width="13" height="346"><path d="M3 9h8l-4-5zM3 335h8l-4 5z" fill="#555"/></svg>

<div class="a" style="left:0;top:0;width:2427px;height:1026px;clip-path:inset(588px 0 88px 0)">
<div class="sl" style="top:598px;background:#e09494"><div class="h">X Translate</div><div class="b" style="background:linear-gradient(90deg,#e09494 0,#9a8787 22%,#7b7b7b 100%)"></div><div class="t"></div><div class="m"></div><div class="p">+</div><div class="k"></div><div class="v">0.00</div></div>
<div class="sl" style="top:674px;background:#96e096"><div class="h">Y Translate</div><div class="b" style="background:linear-gradient(90deg,#96e096 0,#8b9e8b 22%,#7b7b7b 100%)"></div><div class="t"></div><div class="m"></div><div class="p">+</div><div class="k"></div><div class="v">0.00</div></div>
<div class="sl" style="top:750px;background:#9494e0"><div class="h">Z Translate</div><div class="b" style="background:linear-gradient(90deg,#9494e0 0,#85859d 22%,#7b7b7b 100%)"></div><div class="t"></div><div class="m"></div><div class="p">+</div><div class="k"></div><div class="v">0.00</div></div>
<div class="sl" style="top:826px;background:#e09494"><div class="h">X Rotate</div><div class="b" style="background:linear-gradient(90deg,#e09494 0,#9a8787 22%,#7b7b7b 100%)"></div><div class="t"></div><div class="m"></div><div class="p">+</div><div class="k"></div><div class="v">0.00</div></div>
<div class="sl" style="top:902px;background:#96e096"><div class="h">Y Rotate</div><div class="b" style="background:linear-gradient(90deg,#96e096 0,#8b9e8b 22%,#7b7b7b 100%)"></div><div class="t"></div><div class="m"></div><div class="p">+</div><div class="k"></div><div class="v">0.00</div></div>
<svg class="a" style="left:1613px;top:613px" width="32" height="32"><use href="#mov" width="32" height="32"/></svg>
<svg class="a" style="left:1613px;top:689px" width="32" height="32"><use href="#mov" width="32" height="32"/></svg>
<svg class="a" style="left:1613px;top:765px" width="32" height="32"><use href="#mov" width="32" height="32"/></svg>
<svg class="a" style="left:1613px;top:841px" width="32" height="32"><use href="#rot" width="32" height="32"/></svg>
<svg class="a" style="left:1613px;top:917px" width="32" height="32"><use href="#rot" width="32" height="32"/></svg>
<svg class="a" style="left:0;top:0" width="1900" height="960">
<g fill="#5f5f5f"><circle cx="1852" cy="608" r="5"/><circle cx="1852" cy="684" r="5"/><circle cx="1852" cy="760" r="5"/><circle cx="1852" cy="836" r="5"/><circle cx="1852" cy="912" r="5"/></g>
<g fill="#333">
<path d="M1724 637l5-5v10zM1739 637l-5-5v10z"/><circle cx="1731.500" cy="637" r="2.500"/>
<path d="M1724 713l5-5v10zM1739 713l-5-5v10z"/><circle cx="1731.500" cy="713" r="2.500"/>
<path d="M1724 789l5-5v10zM1739 789l-5-5v10z"/><circle cx="1731.500" cy="789" r="2.500"/>
<path d="M1724 865l5-5v10zM1739 865l-5-5v10z"/><circle cx="1731.500" cy="865" r="2.500"/>
</g></svg>
</div>
<svg class="a" style="left:1653px;top:938px" width="14" height="6"><path d="M7 0l4 5H3z" fill="#fff"/></svg>

<!-- BOTTOM STRIP -->
<div class="a" style="left:5px;top:958px;width:1892px;height:7px;background:#4b4b4b"></div>
<svg class="a" style="left:944px;top:958px" width="14" height="7"><path d="M7 0l3 6H4z" fill="#fff"/></svg>
<div class="a" style="left:5px;top:965px;width:1890px;height:37px;background:#c9c9c9"></div>
<div class="a" style="left:827px;top:975px;width:125px;height:26px;background:#4b4b4b;border-radius:7px 7px 0 0;font-size:14px;font-weight:bold;text-align:center;line-height:27px;color:#fff">aniMate Lite</div>
<div class="a" style="left:974px;top:975px;font-size:14px;font-weight:bold;line-height:27px;color:#444">Timeline</div>
<svg class="a" style="left:1862px;top:975px" width="24" height="24"><use href="#menuD" width="24" height="24"/></svg>
<div class="a" style="left:5px;top:1002px;width:1890px;height:24px;background:#4b4b4b"></div>
<div class="a" style="left:12px;top:1008px;width:1px;height:18px;background:#777"></div>
<div class="a" style="left:1450px;top:1008px;width:200px;height:24px;border:1px solid #888;border-radius:6px;font-size:11.500px;font-weight:bold;line-height:22px;padding-left:5px;color:#eee;background:#444">Select a Lesson...</div>
<div class="a" style="left:1628px;top:1012px;width:1px;height:14px;background:#888"></div>
<svg class="a" style="left:1633px;top:1015px" width="12" height="10"><path d="M1 2h10L6 9z" fill="#fff"/></svg>
<svg class="a" style="left:1654px;top:1011px" width="17" height="15" opacity=".35"><use href="#film" width="17" height="15"/></svg>
<div class="a" style="left:1675px;top:1009px;font-size:0">
<span class="a" style="left:0;top:0;width:20px;height:20px;border:1px solid #666;border-radius:5px;color:#777;font-size:11px;font-weight:bold;line-height:18px;text-align:center">1</span>
<span class="a" style="left:23px;top:0;width:20px;height:20px;border:1px solid #666;border-radius:5px;color:#777;font-size:11px;font-weight:bold;line-height:18px;text-align:center">2</span>
<span class="a" style="left:46px;top:0;width:20px;height:20px;border:1px solid #666;border-radius:5px;color:#777;font-size:11px;font-weight:bold;line-height:18px;text-align:center">3</span>
<span class="a" style="left:69px;top:0;width:20px;height:20px;border:1px solid #666;border-radius:5px;color:#777;font-size:11px;font-weight:bold;line-height:18px;text-align:center">4</span>
<span class="a" style="left:92px;top:0;width:20px;height:20px;border:1px solid #666;border-radius:5px;color:#777;font-size:11px;font-weight:bold;line-height:18px;text-align:center">5</span>
<span class="a" style="left:115px;top:0;width:20px;height:20px;border:1px solid #666;border-radius:5px;color:#777;font-size:11px;font-weight:bold;line-height:18px;text-align:center">6</span>
<span class="a" style="left:138px;top:0;width:20px;height:20px;border:1px solid #666;border-radius:5px;color:#777;font-size:11px;font-weight:bold;line-height:18px;text-align:center">7</span>
<span class="a" style="left:161px;top:0;width:20px;height:20px;border:1px solid #666;border-radius:5px;color:#777;font-size:11px;font-weight:bold;line-height:18px;text-align:center">8</span>
<span class="a" style="left:184px;top:0;width:20px;height:20px;border:1px solid #666;border-radius:5px;color:#777;font-size:11px;font-weight:bold;line-height:18px;text-align:center">9</span>
</div>

<!-- DIALOG -->
<div class="a" style="left:75px;top:239px;width:952px;height:531px;background:#fff;box-shadow:0 0 9px rgba(0,0,0,.55);border:1px solid #444;border-width:1px 0 0 1px"></div>
<div class="a" style="left:83px;top:245px;width:16px;height:16px;background:#23282a;color:#e6b422;font-size:10px;line-height:16px;text-align:center;letter-spacing:-1px">DS</div>
<div class="a" style="left:104px;top:246px;font-size:12px;line-height:16px;color:#111">Filtered Save</div>
<svg class="a" style="left:1003px;top:246px" width="16" height="16"><path d="M3 3l10 10M13 3L3 13" stroke="#111" fill="none"/></svg>
<svg class="a" style="left:86px;top:276px" width="100" height="22"><path d="M14 10H3M7 6l-4 4 4 4" stroke="#c4c4c4" fill="none" stroke-width="1.500"/><path d="M32 10h11M39 6l4 4-4 4" stroke="#c4c4c4" fill="none" stroke-width="1.500"/><path d="M57 9l3 3 3-3" stroke="#ccc" fill="none"/><path d="M82 16V5M77 10l5-5 5 5" stroke="#555" fill="none" stroke-width="1.500"/></svg>
<div class="a" style="left:181px;top:275px;width:619px;height:22px;background:#fff;border:1px solid #d9d9d9"></div>
<svg class="a" style="left:186px;top:278px" width="16" height="16"><use href="#yf" width="16" height="16"/></svg>
<div class="a" style="left:205px;top:278px;font-size:12px;line-height:16px;color:#555">«</div>
<div class="a d" style="left:221px;top:278px;line-height:16px">Admin</div>
<div class="a d" style="left:280px;top:278px;line-height:16px">Documents</div>
<div class="a d" style="left:364px;top:278px;line-height:16px">DAZ 3D</div>
<div class="a d" style="left:427px;top:278px;line-height:16px">Studio</div>
<div class="a d" style="left:484px;top:278px;line-height:16px">My Library</div>
<div class="a d" style="left:563px;top:278px;line-height:16px">Presets</div>
<div class="a d" style="left:623px;top:278px;line-height:16px">Characters</div>
<svg class="a" style="left:260px;top:282px" width="360" height="10" fill="none" stroke="#777"><path d="M6 2l3 3-3 3M91 2l3 3-3 3M154 2l3 3-3 3M211 2l3 3-3 3M288 2l3 3-3 3M350 2l3 3-3 3"/></svg>
<svg class="a" style="left:762px;top:276px" width="38" height="20"><path d="M4 9l4 4 4-4" stroke="#555" fill="none" stroke-width="1.300"/><path d="M19 1v18" stroke="#d9d9d9"/><circle cx="29" cy="10" r="4.500" fill="none" stroke="#666" stroke-width="1.300"/><path d="M28 3l3 2.500-3 2" fill="#666"/></svg>
<div class="a" style="left:813px;top:275px;width:202px;height:22px;background:#fff;border:1px solid #d9d9d9;color:#666;font-size:11.600px;line-height:20px;padding-left:8px">Search Characters</div>
<svg class="a" style="left:994px;top:280px" width="14" height="14"><circle cx="8.500" cy="5" r="3.500" fill="none" stroke="#555" stroke-width="1.300"/><path d="M6 8l-4 4" stroke="#555" stroke-width="1.500"/></svg>
<div class="a" style="left:76px;top:304px;width:951px;height:31px;background:#f5f6f7;border-bottom:1px solid #e6e6e6"></div>
<div class="a" style="left:93px;top:311px;font-size:11.600px;line-height:16px;color:#1f3a5c">Organize</div>
<svg class="a" style="left:145px;top:315px" width="10" height="8"><path d="M1 1h7L4.500 5z" fill="#1f3a5c"/></svg>
<div class="a" style="left:184px;top:311px;font-size:11.600px;line-height:16px;color:#1f3a5c">New folder</div>
<svg class="a" style="left:931px;top:313px" width="20" height="14"><path d="M1 1h4v12H1zM7 2h9M7 7h9M7 12h9" stroke="#888" fill="none"/><path d="M2 3h2M2 7h2" stroke="#d33"/></svg>
<svg class="a" style="left:957px;top:315px" width="10" height="8"><path d="M1 1h8L5 6z" fill="#1f3a5c"/></svg>
<svg class="a" style="left:995px;top:311px" width="16" height="16"><circle cx="8" cy="8" r="8" fill="#0a62b8"/><text x="8" y="12" text-anchor="middle" font-size="12" font-weight="bold" fill="#fff" font-family="Liberation Sans">?</text></svg>

<!-- nav pane -->
<div class="a" style="left:76px;top:615px;width:138px;height:24px;background:#d9d9d9"></div>
<div class="a d" style="left:128px;top:339px;line-height:16px">Python</div>
<div class="a d" style="left:120px;top:370px;line-height:16px">OneDrive</div>
<div class="a d" style="left:120px;top:402px;line-height:16px">This PC</div>
<div class="a d" style="left:128px;top:427px;line-height:16px">3D Objects</div>
<div class="a d" style="left:128px;top:451px;line-height:16px">Desktop</div>
<div class="a d" style="left:128px;top:475px;line-height:16px">Documents</div>
<div class="a d" style="left:128px;top:499px;line-height:16px">Downloads</div>
<div class="a d" style="left:128px;top:523px;line-height:16px">Music</div>
<div class="a d" style="left:128px;top:547px;line-height:16px">Pictures</div>
<div class="a d" style="left:128px;top:571px;line-height:16px">Videos</div>
<div class="a d" style="left:128px;top:595px;line-height:16px">Local Disk (C:)</div>
<div class="a d" style="left:128px;top:619px;line-height:16px">New Volume (E:)</div>
<div class="a d" style="left:128px;top:643px;line-height:16px">New Volume (F:)</div>
<svg class="a" style="left:93px;top:335px" width="127" height="320">
<use href="#yf" x="15" y="4" width="16" height="16"/>
<path d="M109 20l3-5 3 2-2 4-3 1-3 2zM112 15l5 3" fill="#999" stroke="#999"/>
<path d="M6 47q0-4 4-4 2-4 5-2 5-1 5 3 3 0 3 3 0 2-3 2H8q-2 0-2-2z" fill="#0a6ed1"/>
<rect x="6" y="67" width="15" height="11" fill="#5bb5f0" stroke="#555"/><path d="M6 82h15" stroke="#999" stroke-width="2"/>
<path d="M14 96l8-3 8 3v11l-8 4-8-4z" fill="#5fd3e0"/><path d="M14 96l8 3v12l-8-4z" fill="#b8eef2"/>
<rect x="14" y="118" width="16" height="12" fill="#1a7fe0"/><path d="M14 130h16" stroke="#123" stroke-width="2"/>
<rect x="17" y="141" width="11" height="14" fill="#fff" stroke="#7ba7c7"/><path d="M19 146h7M19 149h7M19 152h7" stroke="#2a7fc0"/>
<path d="M20 162h6v7h4l-7 8-7-8h4z" fill="#2a7ee0"/>
<path d="M23 186v12a3 3 0 1 1-2-3v-9q4 1 6 5-2-2-4-2z" fill="#1a90e8" stroke="#1a90e8"/>
<rect x="14" y="213" width="16" height="11" fill="#8ec3a8" stroke="#777"/>
<rect x="16" y="236" width="13" height="14" fill="#222"/><rect x="18" y="238" width="9" height="10" fill="#c05a20"/><path d="M18 243h9" stroke="#58a"/>
<path d="M14 258h3v3h-3zM18 258h2v3h-2z" fill="#1a7fe0"/><path d="M16 268h14v4H16z" fill="#888"/><path d="M18 263h8l3 4H16z" fill="#ccc"/>
<path d="M16 292h14v4H16z" fill="#777"/><path d="M18 287h8l3 4H16z" fill="#ddd"/>
<path d="M16 316h14v4H16z" fill="#777"/><path d="M18 311h8l3 4H16z" fill="#ddd"/>
</svg>
<div class="a" style="left:215px;top:335px;width:15px;height:318px;background:#f0f0f0"></div>
<div class="a" style="left:215px;top:571px;width:15px;height:55px;background:#cdcdcd"></div>
<svg class="a" style="left:217px;top:338px" width="12" height="12"><path d="M2 8l4-4 4 4" fill="none" stroke="#444" stroke-width="1.500"/></svg>
<svg class="a" style="left:217px;top:640px" width="12" height="12"><path d="M2 4l4 4 4-4" fill="none" stroke="#444" stroke-width="1.500"/></svg>

<!-- file list -->
<div class="a" style="left:252px;top:340px;font-size:11.600px;line-height:16px;color:#4c607a">Name</div>
<div class="a" style="left:513px;top:340px;font-size:11.600px;line-height:16px;color:#4c607a">Date modified</div>
<div class="a" style="left:657px;top:340px;font-size:11.600px;line-height:16px;color:#4c607a">Type</div>
<div class="a" style="left:777px;top:340px;font-size:11.600px;line-height:16px;color:#4c607a">Size</div>
<div class="a" style="left:506px;top:335px;width:1px;height:25px;background:#e5e5e5"></div>
<div class="a" style="left:651px;top:335px;width:1px;height:25px;background:#e5e5e5"></div>
<div class="a" style="left:771px;top:335px;width:1px;height:25px;background:#e5e5e5"></div>
<div class="a" style="left:850px;top:335px;width:1px;height:25px;background:#e5e5e5"></div>
<svg class="a" style="left:370px;top:335px" width="14" height="8"><path d="M3 6l4-4 4 4" fill="none" stroke="#777"/></svg>
<div class="a" style="left:249px;top:366px;width:598px;height:22px;background:#cce8ff;border:1px solid #99d1ff"></div>
<svg class="a" style="left:255px;top:367px" width="13" height="300">
<use href="#file" y="2" width="13" height="15"/><use href="#file" y="23" width="13" height="15"/><use href="#file" y="44" width="13" height="15"/><use href="#file" y="65" width="13" height="15"/><use href="#file" y="86" width="13" height="15"/><use href="#file" y="107" width="13" height="15"/><use href="#file" y="128" width="13" height="15"/><use href="#file" y="149" width="13" height="15"/><use href="#file" y="170" width="13" height="15"/><use href="#file" y="191" width="13" height="15"/><use href="#file" y="212" width="13" height="15"/><use href="#file" y="233" width="13" height="15"/><use href="#file" y="254" width="13" height="15"/><use href="#file" y="275" width="13" height="15"/>
</svg>
<div class="a d" style="left:273px;top:369px;line-height:16px">3D Universe - Toon Croc.duf</div>
<div class="a d" style="left:273px;top:390px;line-height:16px">14MU Scamp bw.duf</div>
<div class="a d" style="left:273px;top:411px;line-height:16px">37PackardConvert.duf</div>
<div class="a d" style="left:273px;top:432px;line-height:16px">37PackardHearse.duf</div>
<div class="a d" style="left:273px;top:453px;line-height:16px">48Buickwagon.duf</div>
<div class="a d" style="left:273px;top:474px;line-height:16px">49Caddy.duf</div>
<div class="a d" style="left:273px;top:495px;line-height:16px">52Dodge.duf</div>
<div class="a d" style="left:273px;top:516px;line-height:16px">55Caddy.duf</div>
<div class="a d" style="left:273px;top:537px;line-height:16px">57mm MK 110 SolCommand.duf</div>
<div class="a d" style="left:273px;top:558px;line-height:16px">61Linc2F.duf</div>
<div class="a d" style="left:273px;top:579px;line-height:16px">64_Ford_Tbird.duf</div>
<div class="a d" style="left:273px;top:600px;line-height:16px">Acceleration Gate SolCommand.duf</div>
<div class="a d" style="left:273px;top:621px;line-height:16px">Alie_Vyusur_bw.duf</div>
<div class="a d" style="left:273px;top:642px;line-height:16px">Alien Communication Hub SolComman...</div>
<div class="a d g" style="left:513px;top:369px;line-height:16px">7/07/2020 6:30 PM</div>
<div class="a d g" style="left:513px;top:390px;line-height:16px">26/10/2019 8:51 PM</div>
<div class="a d g" style="left:513px;top:411px;line-height:16px">6/08/2017 12:02 AM</div>
<div class="a d g" style="left:513px;top:432px;line-height:16px">6/08/2017 9:15 PM</div>
<div class="a d g" style="left:513px;top:453px;line-height:16px">6/08/2017 9:23 PM</div>
<div class="a d g" style="left:513px;top:474px;line-height:16px">6/08/2017 9:29 PM</div>
<div class="a d g" style="left:513px;top:495px;line-height:16px">6/08/2017 9:35 PM</div>
<div class="a d g" style="left:513px;top:516px;line-height:16px">6/08/2017 9:40 PM</div>
<div class="a d g" style="left:513px;top:537px;line-height:16px">31/01/2017 7:16 PM</div>
<div class="a d g" style="left:513px;top:558px;line-height:16px">6/08/2017 9:48 PM</div>
<div class="a d g" style="left:513px;top:579px;line-height:16px">6/08/2017 9:54 PM</div>
<div class="a d g" style="left:513px;top:600px;line-height:16px">31/01/2017 8:00 PM</div>
<div class="a d g" style="left:513px;top:621px;line-height:16px">16/05/2020 5:41 AM</div>
<div class="a d g" style="left:513px;top:642px;line-height:16px">31/01/2017 8:05 PM</div>
<div class="a d g" style="left:657px;top:369px;line-height:16px">DSON User File</div>
<div class="a d g" style="left:657px;top:390px;line-height:16px">DSON User File</div>
<div class="a d g" style="left:657px;top:411px;line-height:16px">DSON User File</div>
<div class="a d g" style="left:657px;top:432px;line-height:16px">DSON User File</div>
<div class="a d g" style="left:657px;top:453px;line-height:16px">DSON User File</div>
<div class="a d g" style="left:657px;top:474px;line-height:16px">DSON User File</div>
<div class="a d g" style="left:657px;top:495px;line-height:16px">DSON User File</div>
<div class="a d g" style="left:657px;top:516px;line-height:16px">DSON User File</div>
<div class="a d g" style="left:657px;top:537px;line-height:16px">DSON User File</div>
<div class="a d g" style="left:657px;top:558px;line-height:16px">DSON User File</div>
<div class="a d g" style="left:657px;top:579px;line-height:16px">DSON User File</div>
<div class="a d g" style="left:657px;top:600px;line-height:16px">DSON User File</div>
<div class="a d g" style="left:657px;top:621px;line-height:16px">DSON User File</div>
<div class="a d g" style="left:657px;top:642px;line-height:16px">DSON User File</div>
<div class="a d g" style="right:1584px;top:369px;line-height:16px">188 KB</div>
<div class="a d g" style="right:1584px;top:390px;line-height:16px">19,766 KB</div>
<div class="a d g" style="right:1584px;top:411px;line-height:16px">248 KB</div>
<div class="a d g" style="right:1584px;top:432px;line-height:16px">326 KB</div>
<div class="a d g" style="right:1584px;top:453px;line-height:16px">2,442 KB</div>
<div class="a d g" style="right:1584px;top:474px;line-height:16px">471 KB</div>
<div class="a d g" style="right:1584px;top:495px;line-height:16px">358 KB</div>
<div class="a d g" style="right:1584px;top:516px;line-height:16px">149 KB</div>
<div class="a d g" style="right:1584px;top:537px;line-height:16px">19 KB</div>
<div class="a d g" style="right:1584px;top:558px;line-height:16px">1,974 KB</div>
<div class="a d g" style="right:1584px;top:579px;line-height:16px">247 KB</div>
<div class="a d g" style="right:1584px;top:600px;line-height:16px">19 KB</div>
<div class="a d g" style="right:1584px;top:621px;line-height:16px">7,961 KB</div>
<div class="a d g" style="right:1584px;top:642px;line-height:16px">19 KB</div>
<div class="a" style="left:1011px;top:335px;width:15px;height:318px;background:#f0f0f0"></div>
<div class="a" style="left:1011px;top:352px;width:15px;height:17px;background:#cdcdcd"></div>
<svg class="a" style="left:1013px;top:338px" width="12" height="12"><path d="M2 7l4-4 4 4" fill="none" stroke="#444" stroke-width="1.500"/></svg>
<svg class="a" style="left:1013px;top:640px" width="12" height="12"><path d="M2 4l4 4 4-4" fill="none" stroke="#444" stroke-width="1.500"/></svg>

<!-- dialog footer -->
<div class="a" style="left:76px;top:653px;width:951px;height:117px;background:#f0f0f0"></div>
<div class="a d" style="right:2233px;top:668px;line-height:16px">File name:</div>
<div class="a d" style="right:2233px;top:693px;line-height:16px">Save as type:</div>
<div class="a d" style="left:200px;top:664px;width:821px;height:23px;background:#fff;border:1px solid #7a7a7a;line-height:21px;padding-left:4px">3D Universe - Toon Croc.duf</div>
<div class="a d" style="left:200px;top:689px;width:821px;height:23px;background:#e1e1e1;border:1px solid #adadad;line-height:21px;padding-left:3px">DSON User File (*.duf)</div>
<svg class="a" style="left:1006px;top:670px" width="12" height="36"><path d="M2 3l4 4 4-4M2 28l4 4 4-4" fill="none" stroke="#444"/></svg>
<div class="a d" style="left:823px;top:733px;width:85px;height:24px;background:#e5f1fb;border:1.500px solid #0078d7;text-align:center;line-height:21px">Save</div>
<div class="a d" style="left:923px;top:733px;width:85px;height:24px;background:#e1e1e1;border:1px solid #adadad;text-align:center;line-height:22px">Cancel</div>
<svg class="a" style="left:87px;top:744px" width="12" height="10"><path d="M2 7l4-4 4 4" fill="none" stroke="#333" stroke-width="1.300"/></svg>
<div class="a d" style="left:105px;top:740px;line-height:16px">Hide Folders</div>
<svg class="a" style="left:1015px;top:758px" width="10" height="10" fill="#bbb"><path d="M7 1h2v2H7zM4 4h2v2H4zM7 4h2v2H7zM1 7h2v2H1zM4 7h2v2H4zM7 7h2v2H7z"/></svg>

<!-- CONTENT LIBRARY WINDOW -->
<div class="a" style="left:1923px;top:5px;width:500px;height:1021px;background:#8a8a8a"></div>
<div class="a" style="left:1923px;top:5px;width:500px;height:31px;background:#fff"></div>
<div class="a" style="left:1932px;top:12px;width:16px;height:16px;background:#23282a;color:#e6b422;font-size:10px;line-height:16px;text-align:center;letter-spacing:-1px">DS</div>
<div class="a" style="left:1953px;top:13px;font-size:12px;line-height:16px;color:#7a7a7a">DAZ Studio</div>
<svg class="a" style="left:2295px;top:10px" width="120" height="20"><path d="M10 10.500h10" stroke="#888"/><path d="M54.500 5.500h9v10h-9z" fill="none" stroke="#888"/><path d="M100 5l10 10M110 5l-10 10" stroke="#888" fill="none"/></svg>
<div class="a" style="left:1929px;top:41px;width:489px;height:985px;background:#c9c9c9"></div>
<div class="a" style="left:2085px;top:51px;width:155px;height:26px;background:#4b4b4b;border-radius:7px 7px 0 0;text-align:center;font-size:14.500px;font-weight:bold;line-height:27px;color:#fff;letter-spacing:.3px">Content Library</div>
<svg class="a" style="left:2384px;top:51px" width="24" height="24"><use href="#menuD" width="24" height="24"/></svg>
<div class="a" style="left:1939px;top:76px;width:469px;height:941px;background:#4b4b4b;border-radius:6px"></div>
<div class="tb" style="left:1946px;top:83px;width:22px;height:22px"></div>
<div class="tb" style="left:1970px;top:83px;width:22px;height:22px"></div>
<div class="tb" style="left:1994px;top:83px;width:23px;height:22px"></div>
<div class="a" style="left:2018px;top:83px;width:285px;height:22px;background:#fff;border-radius:5px;color:#888;font-size:11.500px;line-height:22px;padding-left:3px;letter-spacing:.15px">Enter text to search by...</div>
<div class="tb" style="left:2305px;top:83px;width:22px;height:22px"></div>
<div class="tb" style="left:2329px;top:83px;width:48px;height:22px"></div>
<div class="tb" style="left:2379px;top:83px;width:22px;height:22px"></div>
<svg class="a" style="left:1946px;top:83px" width="460" height="22"><path d="M7 11l6-4v3h3v2h-3v3z" fill="#333"/><path d="M38 11l-6-4v3h-3v2h3v3z" fill="#6c6c6c"/><path d="M59 4l5 6h-2v6h-6v-2h3v-4h-3z" fill="#333"/><path d="M365 8h10l-5 8z" fill="#6c6c6c"/><ellipse cx="393" cy="7" rx="7" ry="3" fill="#666"/><path d="M386 7v11q7 4 14 0V7q-7 4-14 0z" fill="#6a6a6a"/><path d="M412 4v14" stroke="#666"/><path d="M416 8h8l-4 7z" fill="#333"/><circle cx="444" cy="8" r="4.500" fill="none" stroke="#6a6a6a" stroke-width="2"/><path d="M447 12l6 6" stroke="#6a6a6a" stroke-width="2.500"/></svg>

<!-- tree -->
<div class="a" style="left:1940px;top:111px;width:227px;height:896px;background:#7a7a7a"></div>
<div class="a" style="left:1947px;top:113px;width:200px;height:894px;background:#8a8a8a"></div>
<div class="a" style="left:1947px;top:654px;width:200px;height:24px;background:#ff9900"></div>
<div class="a" style="left:2154px;top:131px;width:1px;height:857px;background:#999"></div>
<div class="a" style="left:2149px;top:707px;width:10px;height:97px;background:linear-gradient(90deg,#a0a0a0,#777);border-radius:5px;border:1px solid #666"></div>
<svg class="a" style="left:2149px;top:115px" width="12" height="890"><path d="M2 7h8L6 2zM2 882h8l-4 5z" fill="#4b4b4b"/></svg>
<div class="a" style="left:1940px;top:0;width:210px;height:1026px;clip-path:inset(113px 0 19px 0)">
<svg class="a" style="left:0;top:0" width="210" height="1026" viewBox="1940 0 210 1026">
<g fill="#fff"><path d="M1980 106l6 4-6 4zM1980 130l6 4-6 4zM1980 178l6 4-6 4zM1980 250l6 4-6 4zM1980 274l6 4-6 4zM1980 298l6 4-6 4zM1980 394l6 4-6 4zM1980 418l6 4-6 4zM1980 442l6 4-6 4zM1980 466l6 4-6 4zM1980 490l6 4-6 4zM1980 538l6 4-6 4zM1980 562l6 4-6 4zM1980 634l6 4-6 4zM1980 682l6 4-6 4zM1980 706l6 4-6 4zM1980 754l6 4-6 4zM1980 778l6 4-6 4zM1980 826l6 4-6 4zM1980 850l6 4-6 4zM1980 874l6 4-6 4zM1980 898l6 4-6 4zM1980 922l6 4-6 4zM1980 946l6 4-6 4zM1980 970l6 4-6 4zM1980 994l6 4-6 4z"/></g>
<path d="M1980 658l6 4-6 4z" fill="#000"/>
<use href="#fold" x="1991" y="104" width="20" height="14"/><use href="#fold" x="1991" y="128" width="20" height="14"/><use href="#fold" x="1991" y="152" width="20" height="14"/><use href="#fold" x="1991" y="176" width="20" height="14"/><use href="#fold" x="1991" y="200" width="20" height="14"/><use href="#fold" x="1991" y="224" width="20" height="14"/>
<circle cx="2001" cy="256" r="10" fill="#000"/><circle cx="1998" cy="256" r="3" fill="#ddd"/><circle cx="2004" cy="256" r="3" fill="#ddd"/>
<use href="#fold" x="1991" y="272" width="20" height="14"/><use href="#fold" x="1991" y="296" width="20" height="14"/><use href="#fold" x="1991" y="320" width="20" height="14"/><use href="#fold" x="1991" y="344" width="20" height="14"/><use href="#fold" x="1991" y="368" width="20" height="14"/><use href="#fold" x="1991" y="392" width="20" height="14"/><use href="#fold" x="1991" y="416" width="20" height="14"/><use href="#fold" x="1991" y="440" width="20" height="14"/><use href="#fold" x="1991" y="464" width="20" height="14"/><use href="#fold" x="1991" y="488" width="20" height="14"/><use href="#fold" x="1991" y="512" width="20" height="14"/><use href="#fold" x="1991" y="536" width="20" height="14"/><use href="#fold" x="1991" y="560" width="20" height="14"/><use href="#fold" x="1991" y="584" width="20" height="14"/><use href="#fold" x="1991" y="608" width="20" height="14"/><use href="#fold" x="1991" y="632" width="20" height="14"/>
<use href="#foldK" x="1991" y="656" width="20" height="14"/>
<use href="#fold" x="1991" y="680" width="20" height="14"/><use href="#fold" x="1991" y="704" width="20" height="14"/><use href="#fold" x="1991" y="728" width="20" height="14"/><use href="#fold" x="1991" y="752" width="20" height="14"/><use href="#fold" x="1991" y="776" width="20" height="14"/><use href="#fold" x="1991" y="800" width="20" height="14"/><use href="#fold" x="1991" y="824" width="20" height="14"/><use href="#fold" x="1991" y="848" width="20" height="14"/><use href="#fold" x="1991" y="872" width="20" height="14"/><use href="#fold" x="1991" y="896" width="20" height="14"/><use href="#fold" x="1991" y="920" width="20" height="14"/><use href="#fold" x="1991" y="944" width="20" height="14"/><use href="#fold" x="1991" y="968" width="20" height="14"/><use href="#fold" x="1991" y="992" width="20" height="14"/>
</svg>
</div>
<div class="a" style="left:0;top:0;width:2150px;height:1026px;clip-path:inset(113px 0 19px 0)">
<div class="a tr" style="top:104px">!!!_Vehicles</div>
<div class="a tr" style="top:128px">!!!!_Weapons</div>
<div class="a tr" style="top:152px">!Converted</div>
<div class="a tr" style="top:176px">!DieselPunkUniverse</div>
<div class="a tr" style="top:200px">1920 Pierce-Arrow 7 R2</div>
<div class="a tr" style="top:224px">1928 Cadillac Town Sed...</div>
<div class="a tr" style="top:248px">3D Universe - Toon</div>
<div class="a tr" style="top:272px">3Djoji</div>
<div class="a tr" style="top:296px">3wComics</div>
<div class="a tr" style="top:320px">4Arms</div>
<div class="a tr" style="top:344px">adh3d</div>
<div class="a tr" style="top:368px">AK Ravencollar</div>
<div class="a tr" style="top:392px">AK ThePod</div>
<div class="a tr" style="top:416px">Akatora</div>
<div class="a tr" style="top:440px">amy_aimei</div>
<div class="a tr" style="top:464px">Antonia Clothing</div>
<div class="a tr" style="top:488px">ApolloMax Clothing</div>
<div class="a tr" style="top:512px">BR-JLoDress</div>
<div class="a tr" style="top:536px">BVH Cynthia Clothes</div>
<div class="a tr" style="top:560px">CDI</div>
<div class="a tr" style="top:584px">CheyenneAcc</div>
<div class="a tr" style="top:608px">Cunningham Ambulance...</div>
<div class="a tr" style="top:632px">DAZ Anatomy</div>
<div class="a tr" style="top:656px;color:#000">DAZ Animals</div>
<div class="a tr" style="top:680px">DAZ Characters</div>
<div class="a tr" style="top:704px">DAZ Clothing</div>
<div class="a tr" style="top:728px">DAZ Desert Soldier</div>
<div class="a tr" style="top:752px">DAZ Dinosaurs</div>
<div class="a tr" style="top:776px">DAZ Dragons</div>
<div class="a tr" style="top:800px">DAZ Emoticons</div>
<div class="a tr" style="top:824px">DAZ Environment &amp; Plants</div>
<div class="a tr" style="top:848px">DAZ Genesis</div>
<div class="a tr" style="top:872px">DAZ Genesis 2 Female</div>
<div class="a tr" style="top:896px">DAZ Genesis 2 Male</div>
<div class="a tr" style="top:920px">DAZ Hair</div>
<div class="a tr" style="top:944px">DAZ People</div>
<div class="a tr" style="top:968px">DAZ the Girl</div>
<div class="a tr" style="top:992px">DAZ's Aiko 3</div>
</div>

<!-- grid area -->
<div class="a" style="left:2172px;top:111px;width:235px;height:896px;background:#7b7b7b"></div>
<div class="a" style="left:2177px;top:147px;width:225px;height:824px;background:#858585"></div>
<div class="tb" style="left:2177px;top:117px;width:24px;height:23px"></div>
<div class="a" style="left:2202px;top:117px;width:25px;height:23px;background:#fff;border-radius:5px;color:#111;font-size:13px;text-align:center;line-height:23px">2</div>
<div class="tb" style="left:2228px;top:117px;width:23px;height:23px"></div>
<svg class="a" style="left:2177px;top:117px" width="74" height="23"><path d="M6 11.500l6-4v3h3v2h-3v3z" fill="#333"/><path d="M67 11.500l-6-4v3h-3v2h3v3z" fill="#333"/></svg>
<div class="a" style="left:2259px;top:121px;font-size:11px;line-height:16px;color:#eee;letter-spacing:.1px">265-298 of 298</div>
<div class="tb" style="left:2343px;top:118px;width:11px;height:11px;border-radius:50%"></div>
<div class="tb" style="left:2343px;top:130px;width:11px;height:11px;border-radius:50%"></div>
<div class="a" style="left:2354px;top:117px;width:23px;height:24px;background:#5f5f5f;border-radius:5px"></div>
<div class="tb" style="left:2378px;top:117px;width:24px;height:24px"></div>
<svg class="a" style="left:2343px;top:117px" width="60" height="24"><path d="M3 6.500h5M5.500 4v5M3 18.500h5" stroke="#222"/><path d="M17 6h4v4h-4zM25 6h4v4h-4zM17 14h4v4h-4zM25 14h4v4h-4z" fill="none" stroke="#8a8a8a"/><path d="M41 6h12M41 8h12M41 10h12M41 12h12M41 14h12M41 16h12M41 18h12" stroke="#222"/></svg>

<div class="a" style="left:0;top:0;width:2427px;height:1026px;clip-path:inset(147px 0 55px 0)">
<div class="card" style="left:2184px;top:62px"><svg class="th" viewBox="0 0 87 87"><rect width="87" height="87" fill="#fff"/><rect y="76" width="87" height="11" fill="#ddd"/></svg></div>
<div class="card" style="left:2284px;top:62px"><svg class="th" viewBox="0 0 87 87"><rect width="87" height="87" fill="#bbb"/></svg></div>
<div class="lab" style="left:2184px;top:162px">Songbird -br<br>Wabler</div>
<div class="lab" style="left:2284px;top:169px">StagBeetle</div>

<div class="card" style="left:2184px;top:202px"><svg class="th" viewBox="0 0 87 87"><rect width="87" height="87" fill="#fff"/><path d="M13 57Q22 42 36 35 46 30 50 20 52 8 58 3 64 1 66 6L63 10Q60 14 58 24 56 40 50 48 44 54 34 54 22 55 13 57Z" fill="#b4b4b4"/><path d="M30 50Q42 36 52 30 54 42 46 50 38 54 30 50Z" fill="#dadada"/><path d="M64 7L74 18 62 11Z" fill="#dccb2b"/><path d="M42 52H45V80H42ZM46 52H48V80H46Z" fill="#e8189a"/><path d="M31 81H55M33 84H55" stroke="#e8189a" stroke-width="1.500"/></svg></div>
<div class="card" style="left:2284px;top:202px"><svg class="th" viewBox="0 0 87 87"><rect width="87" height="87" fill="#fff"/><path d="M14 60Q23 45 37 38 47 33 51 23 53 11 59 6 65 4 67 9L64 13Q61 17 59 27 57 43 51 51 45 57 35 57 23 58 14 60Z" fill="#b4b4b4"/><path d="M31 53Q43 39 53 33 55 45 47 53 39 57 31 53Z" fill="#dadada"/><path d="M65 10L72 23 63 14Z" fill="#dccb2b"/><path d="M42 56H45V80H42Z" fill="#e8189a"/><path d="M32 81H54M34 84H54" stroke="#e8189a" stroke-width="1.500"/><path d="M40 11H50V14H58V27H42Z" fill="#b01818"/><path d="M60 1Q70 3 72 12L65 7Z" fill="none" stroke="#b01818" stroke-width="2"/></svg></div>
<div class="lab" style="left:2184px;top:309px">stork</div>
<div class="lab" style="left:2284px;top:309px;width:85px;letter-spacing:-.1px">stork_...agnets</div>

<div class="card" style="left:2184px;top:342px"><svg class="th" viewBox="0 0 87 87"><rect width="87" height="87" fill="#8b8078"/><path d="M1 87Q3 62 14 50 24 48 30 55 50 52 87 53 60 62 52 70L70 87Z" fill="#746c64"/><path d="M30 30Q50 28 62 15 74 10 87 8V14Q70 24 60 28 48 36 38 38Z" fill="#e6e5bb"/><path d="M10 17Q18 25 30 30 42 38 55 44 68 50 80 56L72 58Q56 50 40 46 22 42 21 35 12 36 0 36V31Q10 30 14 28 10 22 10 17Z" fill="#eeebd0"/><path d="M72 54l10 4-7 1z" fill="#e88"/></svg></div>
<div class="card" style="left:2284px;top:342px"><svg class="th" viewBox="0 0 87 87"><rect width="87" height="87" fill="#8b8078"/><path d="M10 87Q18 64 30 62 36 58 50 58 70 55 82 62 60 68 56 72L62 87Z" fill="#756c64"/><path d="M30 32Q45 28 55 18 68 10 86 20 70 22 60 30 50 38 40 38Z" fill="#6e5a36"/><path d="M0 30Q12 26 16 24 26 30 34 34 30 40 22 38 10 36 0 44Z" fill="#7a6238"/><path d="M12 22Q18 16 23 22L40 33 28 32Z" fill="#22224a"/><path d="M40 36L66 47 50 46Z" fill="#12123a"/></svg></div>
<div class="lab" style="left:2184px;top:449px">Swan</div>
<div class="lab" style="left:2284px;top:449px">SwanCG</div>

<div class="card" style="left:2184px;top:482px"><svg class="th" viewBox="0 0 87 87"><defs><linearGradient id="cbg" x2="0" y2="1"><stop offset="0" stop-color="#666"/><stop offset="1" stop-color="#c4c4c4"/></linearGradient></defs><rect width="87" height="87" fill="url(#cbg)"/><path d="M13 5L81 12 74 82 5 73Z" fill="#4a9bb3" stroke="#222" stroke-width="1.500"/><path d="M36 20L50 10 58 22Q62 44 54 62 44 76 30 66 20 56 13 60 8 68 18 87H38Q28 78 30 72 44 80 56 68 62 50 60 30Z" fill="#53664a"/><path d="M30 18Q40 4 50 6 58 12 60 30 52 38 46 36 42 28 36 24Z" fill="#53664a"/><ellipse cx="48" cy="54" rx="8" ry="17" fill="#cfcfa8"/><ellipse cx="47" cy="28" rx="6" ry="10" fill="#a5343a"/><path d="M38 6l4 2-2 4-3-2z" fill="#ee0"/><path d="M60 35L78 26M44 40L22 30M62 62L70 55" stroke="#53664a" stroke-width="3"/></svg></div>
<div class="card" style="left:2284px;top:482px"><svg class="th" viewBox="0 0 87 87"><rect width="87" height="87" fill="#8a8a8a"/><path d="M10 20Q30 10 48 2 70 10 80 20 84 50 60 78 35 85 15 60 8 40 10 20Z" fill="#c89a45" stroke="#999" stroke-width="3"/><path d="M4 36H80V50H4Z" fill="#d8882a"/><text x="5" y="47" font-family="Liberation Sans" font-size="12" font-weight="bold" fill="#c26a18" textLength="74">BUFFALO</text><path d="M20 85Q25 55 45 45 42 28 50 20 55 30 57 38 68 35 70 45 67 55 62 50 70 70 74 80H55Q40 85 20 85Z" fill="#8f8f8f"/><circle cx="34" cy="22" r="6" fill="#d8d0a0"/><text x="85" y="86" transform="rotate(-90 85 86)" font-family="Liberation Sans" font-size="9.500" fill="#000" textLength="85">www.3duniverse.co.za</text></svg></div>
<div class="lab" style="left:2184px;top:589px">Toon Croc</div>
<div class="lab" style="left:2284px;top:589px">Toon Donkey</div>

<div class="card" style="left:2184px;top:622px"><svg class="th" viewBox="0 0 87 87"><rect width="87" height="87" fill="#6a9cc0"/><path d="M0 0H30Q50 20 58 45 62 70 58 87H0Z" fill="#e4d8cc"/><path d="M16 10Q38 28 60 32L58 42Q34 36 12 16Z" fill="#9b5a32"/><circle cx="49" cy="65" r="12" fill="#555"/><path d="M72 5Q86 25 80 60 72 40 70 15Z" fill="#e4d8cc"/></svg></div>
<div class="card" style="left:2284px;top:622px"><svg class="th" viewBox="0 0 87 87"><rect width="87" height="87" fill="#a4cbe0"/><path d="M30 40Q40 30 58 32 72 50 84 58 80 72 58 70 60 87 50 87H35Q28 60 30 40Z" fill="#e8d8c8"/><path d="M42 26Q38 10 48 6L44 3Q30 10 34 32ZM58 28Q60 14 68 10L64 6Q50 14 50 30Z" fill="#8b6a44"/><circle cx="44" cy="46" r="5" fill="#ad7a3a"/><path d="M50 68Q64 76 78 66" stroke="#5a3a2a" fill="none" stroke-width="2"/></svg></div>
<svg class="a" style="left:2186px;top:622px" width="22" height="22"><path d="M0 6Q0 0 6 0H22Q20 18 0 22Z" fill="#ff9900"/><use href="#scroll" x="3" y="3" width="14" height="14"/></svg>
<svg class="a" style="left:2285px;top:622px" width="22" height="22"><path d="M0 6Q0 0 6 0H22Q20 18 0 22Z" fill="#ff9900"/><use href="#scroll" x="3" y="3" width="14" height="14"/></svg>
<div class="lab" style="left:2184px;top:729px">Toon Goat Bell</div>
<div class="lab" style="left:2284px;top:729px">Toon Goat</div>

<div class="card" style="left:2184px;top:762px"><svg class="th" viewBox="0 0 87 87"><defs><linearGradient id="wbg" x2="1" y2="1"><stop offset="0" stop-color="#4a6478"/><stop offset="1" stop-color="#142530"/></linearGradient></defs><rect width="87" height="87" fill="url(#wbg)"/><path d="M30 20Q36 14 40 30 46 40 48 16 60 16 68 20L72 70Q55 75 45 70 30 70 18 70Z" fill="#6a665c"/><path d="M26 22L37 22 28 68 18 70ZM47 18L68 16 72 68 46 70Z" fill="#1f7ed8"/><path d="M52 30l8 3-3 8-7-3zM56 52l9-2 2 10-8 2zM26 40l5 2-3 8-3-2z" fill="#e8891c"/><text x="86" y="86" transform="rotate(-90 86 86)" font-family="Liberation Sans" font-size="9.500" fill="#fff" textLength="85">www.3duniverse.co.za</text></svg></div>
<div class="card" style="left:2284px;top:762px"><svg class="th" viewBox="0 0 87 87"><defs><linearGradient id="mbg" x2="0" y2="1"><stop offset="0" stop-color="#3f5c70"/><stop offset="1" stop-color="#1b2a36"/></linearGradient></defs><rect width="87" height="87" fill="url(#mbg)"/><path d="M0 35Q30 15 60 10 76 30 84 60 60 72 50 87H0Z" fill="#4d4843"/><ellipse cx="58" cy="30" rx="10" ry="15" fill="#fff" stroke="#a0603a" stroke-width="2"/><circle cx="60" cy="32" r="6" fill="#2da02d"/><circle cx="60" cy="33" r="2.500" fill="#000"/><ellipse cx="33" cy="31" rx="6" ry="9" fill="#e8e0d0" stroke="#a0603a"/><ellipse cx="6" cy="32" rx="9" ry="11" fill="#111"/><path d="M40 70Q52 68 60 56 52 78 38 76Z" fill="#222"/><path d="M42 68h7v6h-7z" fill="#eee"/><text x="86" y="86" transform="rotate(-90 86 86)" font-family="Liberation Sans" font-size="9.500" fill="#fff" textLength="85">www.3duniverse.co.za</text></svg></div>
<div class="lab" style="left:2184px;top:862px">Toon Mouse<br>Waistcoat</div>
<div class="lab" style="left:2284px;top:869px">Toon Mouse</div>

<div class="card" style="left:2184px;top:902px"><svg class="th" viewBox="0 0 87 87"><defs><linearGradient id="sbg" x2="1" y2="1"><stop offset="0" stop-color="#4c4c4c"/><stop offset="1" stop-color="#bbb"/></linearGradient></defs><rect width="87" height="87" fill="url(#sbg)"/><path d="M18 25H70V70H18Z" fill="#6e8296"/><path d="M0 28Q30 22 52 30 68 28 82 38 70 50 50 50 25 55 8 45Z" fill="#919ba5"/><text x="86" y="86" transform="rotate(-90 86 86)" font-family="Liberation Sans" font-size="9.500" fill="#000" textLength="85">www.3duniverse.co.za</text></svg></div>
<div class="card" style="left:2284px;top:902px"><svg class="th" viewBox="0 0 87 87"><defs><linearGradient id="tbg" x2="1" y2="1"><stop offset="0" stop-color="#c0c8d4"/><stop offset="1" stop-color="#0e1a26"/></linearGradient></defs><rect width="87" height="87" fill="url(#tbg)"/><path d="M25 20Q40 8 58 22 60 30 50 28 40 25 32 30 38 50 52 60 70 70 60 87H42Q38 70 22 40Z" fill="#352a3a"/><text x="86" y="86" transform="rotate(-90 86 86)" font-family="Liberation Sans" font-size="9.500" fill="#fff" textLength="85">www.3duniverse.co.za</text></svg></div>
</div>

<!-- grid scrollbar -->
<div class="a" style="left:2385px;top:147px;width:17px;height:824px;background:#808080"></div>
<div class="a" style="left:2393px;top:165px;width:1px;height:780px;background:#999"></div>
<div class="a" style="left:2389px;top:240px;width:10px;height:268px;background:linear-gradient(90deg,#a8a8a8,#777);border-radius:5px"></div>
<svg class="a" style="left:2388px;top:148px" width="12" height="815"><path d="M1 8h9L5.500 3zM1 804h9l-4.500 6z" fill="#4b4b4b"/></svg>
<svg class="a" style="left:2166px;top:106px" width="12" height="6"><path d="M6 5L2 0h8z" fill="#fff"/></svg>
<svg class="a" style="left:2166px;top:554px" width="6" height="12"><path d="M0 6l5-4v8z" fill="#fff"/></svg>
<svg class="a" style="left:2166px;top:1008px" width="14" height="8"><path d="M7 0l4 6H3z" fill="#fff"/></svg>
<div class="tb" style="left:2177px;top:978px;width:24px;height:24px;background:linear-gradient(#8f8f8f,#6c6c6c);border-color:#555"></div>
<div class="tb" style="left:2206px;top:978px;width:24px;height:24px;background:linear-gradient(#8f8f8f,#6c6c6c);border-color:#555"></div>
<div class="tb" style="left:2350px;top:978px;width:24px;height:24px;background:linear-gradient(#8f8f8f,#6c6c6c);border-color:#555"></div>
<div class="tb" style="left:2378px;top:978px;width:24px;height:24px;background:linear-gradient(#8f8f8f,#6c6c6c);border-color:#555"></div>
<svg class="a" style="left:2177px;top:978px" width="226" height="24"><path d="M8 12.500h9M12.500 8v9M37 12.500h9" stroke="#555" stroke-width="2"/><path d="M178 7h9l3 3v10h-12z M201 7h12v13h-12z" fill="none" stroke="#606060" stroke-width="1.500"/></svg>
</body></html>
